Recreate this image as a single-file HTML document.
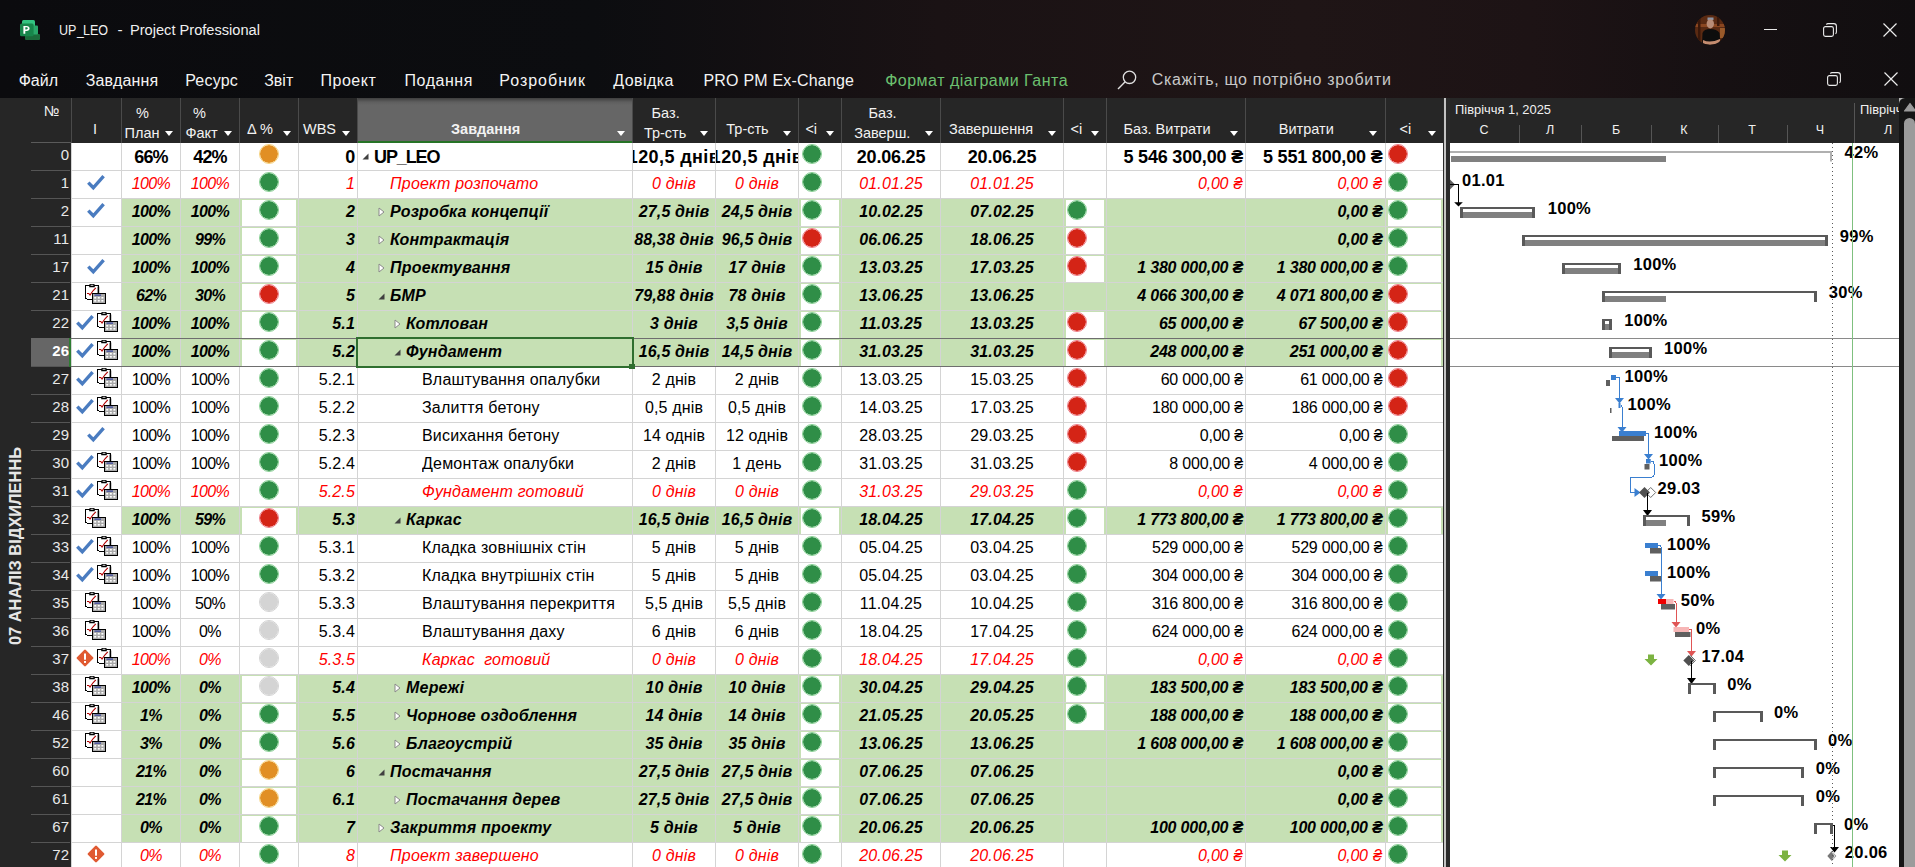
<!DOCTYPE html><html><head><meta charset="utf-8"><style>

*{box-sizing:border-box}
html,body{margin:0;padding:0}
body{width:1915px;height:867px;overflow:hidden;position:relative;background:#fff;font-family:"Liberation Sans",sans-serif}
.a{position:absolute}
.ci{position:absolute;width:20px;height:20px;border-radius:50%}
.c{position:absolute;height:27px;line-height:28px;white-space:pre;overflow:hidden;font-size:16px;color:#000}
.cc{display:flex;justify-content:center}
.cr{text-align:right}
.k-project{font-weight:bold;font-size:18px;padding-top:0.5px}
.k-summary{font-weight:bold;font-style:italic}
.k-milestone{font-style:italic;color:#f00}
.hd{position:absolute;color:#f2f2f2;font-size:14.5px;white-space:pre;line-height:17px}
.tri{position:absolute;width:0;height:0;border-left:4px solid transparent;border-right:4px solid transparent;border-top:5px solid #fff}
.mn{position:absolute;top:71px;color:#f4f4f4;font-size:16px;white-space:pre;line-height:20px}
.gl{position:absolute;font-weight:bold;font-size:16.5px;white-space:pre;line-height:19px;color:#000;letter-spacing:0.3px}

</style></head><body>
<div class="a" style="left:0;top:0;width:1915px;height:98px;background:linear-gradient(90deg,#0b0b0e 0%,#0c0d10 31%,#1a1214 49%,#1f1516 68%,#1d1315 80%,#161012 90%,#110e10 100%)"></div>
<svg class="a" style="left:18px;top:18px" width="24" height="24" viewBox="18 18 24 24">
<rect x="22" y="20" width="13" height="10" rx="1.5" fill="#33c481"/>
<rect x="25" y="34" width="15" height="6" rx="1" fill="#1b6b3b"/>
<rect x="32" y="25.5" width="6" height="9" rx="1" fill="#2aa86a"/>
<rect x="20" y="23.5" width="13.6" height="12.8" rx="1.5" fill="#17864b"/>
<path d="M23.4 33.8v-7.8h3.2c1.9 0 3 0.9 3 2.4s-1.1 2.5-3 2.5h-1.3v2.9z M25.3 29.4h1.1c0.9 0 1.4-0.4 1.4-1.1s-0.5-1.1-1.4-1.1h-1.1z" fill="#fff"/>
</svg>
<div class="a" style="left:58.6px;top:20.5px;color:#f0f0f0;font-size:15.3px;line-height:18px;white-space:pre;transform-origin:0 0;transform:scaleX(0.82)">UP</div>
<div class="a" style="left:76.6px;top:20.5px;color:#f0f0f0;font-size:15.3px;line-height:18px;white-space:pre;transform-origin:0 0;transform:scaleX(0.8)">_</div>
<div class="a" style="left:83.2px;top:20.5px;color:#f0f0f0;font-size:15.3px;line-height:18px;white-space:pre;transform-origin:0 0;transform:scaleX(0.82)">LEO</div>
<div class="a" style="left:117.5px;top:20.5px;color:#f0f0f0;font-size:15.3px;line-height:18px;white-space:pre;transform-origin:0 0;">-</div>
<div class="a" style="left:130.3px;top:20.5px;color:#f0f0f0;font-size:15.3px;line-height:18px;white-space:pre;transform-origin:0 0;transform:scaleX(0.955)">Project Professional</div>
<svg class="a" style="left:1695px;top:15px" width="30" height="30" viewBox="0 0 30 30">
<defs><clipPath id="av"><circle cx="15" cy="15" r="15"/></clipPath></defs>
<g clip-path="url(#av)">
<rect width="30" height="30" fill="#5a2a12"/>
<rect x="0" y="9" width="30" height="3" fill="#8a4620"/>
<rect x="3" y="2" width="2.5" height="26" fill="#3a180a"/>
<rect x="22" y="2" width="2.5" height="9" fill="#3a180a"/>
<rect x="25" y="13" width="5" height="10" fill="#9a5a2a"/>
<rect x="12.5" y="2.5" width="6" height="2.5" fill="#8c96a8"/>
<ellipse cx="15.3" cy="8.8" rx="3.7" ry="4.6" fill="#b98c76"/>
<path d="M7 30 L7.5 18 Q9 14 15 14 Q22 14 24.5 18 L25.5 30 Z" fill="#0d0d0d"/>
<path d="M8 25 Q15 28.5 25 24 L25 28 Q15 31 8 28.5 Z" fill="#c48c70"/>
</g></svg>
<div class="a" style="left:1764px;top:29px;width:13px;height:1px;background:#e8e8e8"></div>
<svg class="a" style="left:1823px;top:23px" width="14" height="14" viewBox="0 0 14 14"><rect x="0.6" y="3.6" width="9.8" height="9.8" rx="1.8" fill="none" stroke="#ececec" stroke-width="1.1"/><path d="M3.4 1.6 Q3.8 0.6 5 0.6 H10.8 Q13.4 0.6 13.4 3.2 V9 Q13.4 10.3 12.4 10.6" fill="none" stroke="#ececec" stroke-width="1.1"/></svg>
<svg class="a" style="left:1883px;top:23px" width="14" height="14" viewBox="0 0 14 14"><path d="M0.5 0.5 L13.5 13.5 M13.5 0.5 L0.5 13.5" stroke="#ececec" stroke-width="1.2"/></svg>
<svg class="a" style="left:1827px;top:72px" width="14" height="14" viewBox="0 0 14 14"><rect x="0.6" y="3.6" width="9.8" height="9.8" rx="1.8" fill="none" stroke="#ececec" stroke-width="1.1"/><path d="M3.4 1.6 Q3.8 0.6 5 0.6 H10.8 Q13.4 0.6 13.4 3.2 V9 Q13.4 10.3 12.4 10.6" fill="none" stroke="#ececec" stroke-width="1.1"/></svg>
<svg class="a" style="left:1884px;top:72px" width="14" height="14" viewBox="0 0 14 14"><path d="M0.5 0.5 L13.5 13.5 M13.5 0.5 L0.5 13.5" stroke="#ececec" stroke-width="1.2"/></svg>
<div class="mn" style="left:18.7px;letter-spacing:0px">Файл</div>
<div class="mn" style="left:85.7px;letter-spacing:0.14px">Завдання</div>
<div class="mn" style="left:185.2px;letter-spacing:0.2px">Ресурс</div>
<div class="mn" style="left:264.2px;letter-spacing:0px">Звіт</div>
<div class="mn" style="left:320.5px;letter-spacing:0.5px">Проект</div>
<div class="mn" style="left:404.5px;letter-spacing:0.55px">Подання</div>
<div class="mn" style="left:499.2px;letter-spacing:1.0px">Розробник</div>
<div class="mn" style="left:613.2px;letter-spacing:0.43px">Довідка</div>
<div class="mn" style="left:703.5px;letter-spacing:0.19px">PRO PM Ex-Change</div>
<div class="mn" style="left:885.2px;color:#6cc06f;letter-spacing:0.49px">Формат діаграми Ганта</div>
<svg class="a" style="left:1117px;top:69px" width="21" height="21" viewBox="0 0 21 21">
<circle cx="12.5" cy="8.3" r="6.2" fill="none" stroke="#e0e0e0" stroke-width="1.3"/>
<path d="M8.2 12.8 L1 20" stroke="#e0e0e0" stroke-width="1.4"/></svg>
<div class="mn" style="top:70px;left:1151.7px;color:#c8c8c8;letter-spacing:0.68px">Скажіть, що потрібно зробити</div>
<div class="a" style="left:0;top:98px;width:1443px;height:45px;background:#262626;z-index:2"></div>
<div class="a" style="left:358px;top:98px;width:274px;height:45px;background:linear-gradient(180deg,#3e3e3e 0px,#5e5e5e 4px,#666 7px,#666 100%);z-index:2"></div>
<div class="a" style="left:358px;top:141px;width:274px;height:2px;background:#267326;z-index:3"></div>
<div class="a" style="left:71px;top:98px;width:1px;height:45px;background:#4a4a4a;z-index:2"></div>
<div class="a" style="left:121px;top:98px;width:1px;height:45px;background:#4a4a4a;z-index:2"></div>
<div class="a" style="left:180px;top:98px;width:1px;height:45px;background:#4a4a4a;z-index:2"></div>
<div class="a" style="left:239px;top:98px;width:1px;height:45px;background:#4a4a4a;z-index:2"></div>
<div class="a" style="left:298px;top:98px;width:1px;height:45px;background:#4a4a4a;z-index:2"></div>
<div class="a" style="left:357px;top:98px;width:1px;height:45px;background:#4a4a4a;z-index:2"></div>
<div class="a" style="left:632px;top:98px;width:1px;height:45px;background:#4a4a4a;z-index:2"></div>
<div class="a" style="left:715px;top:98px;width:1px;height:45px;background:#4a4a4a;z-index:2"></div>
<div class="a" style="left:798px;top:98px;width:1px;height:45px;background:#4a4a4a;z-index:2"></div>
<div class="a" style="left:841px;top:98px;width:1px;height:45px;background:#4a4a4a;z-index:2"></div>
<div class="a" style="left:940px;top:98px;width:1px;height:45px;background:#4a4a4a;z-index:2"></div>
<div class="a" style="left:1063px;top:98px;width:1px;height:45px;background:#4a4a4a;z-index:2"></div>
<div class="a" style="left:1106px;top:98px;width:1px;height:45px;background:#4a4a4a;z-index:2"></div>
<div class="a" style="left:1245px;top:98px;width:1px;height:45px;background:#4a4a4a;z-index:2"></div>
<div class="a" style="left:1385px;top:98px;width:1px;height:45px;background:#4a4a4a;z-index:2"></div>
<div class="hd" style="left:44px;top:102.5px;z-index:3">№</div>
<div class="hd" style="left:93px;top:121.0px;z-index:3">I</div>
<div class="hd" style="left:136px;top:104.5px;z-index:3">%</div>
<div class="hd" style="left:124.6px;top:124.5px;z-index:3">План</div>
<div class="tri" style="left:165px;top:130.5px;z-index:3"></div>
<div class="hd" style="left:193px;top:104.5px;z-index:3">%</div>
<div class="hd" style="left:185.4px;top:124.5px;z-index:3">Факт</div>
<div class="tri" style="left:224px;top:130.5px;z-index:3"></div>
<div class="hd" style="left:247px;top:121.0px;z-index:3">Δ %</div>
<div class="tri" style="left:283px;top:130.5px;z-index:3"></div>
<div class="hd" style="left:303px;top:121.0px;z-index:3">WBS</div>
<div class="tri" style="left:342px;top:130.5px;z-index:3"></div>
<div class="hd" style="left:451px;top:121.0px;font-weight:bold;z-index:3">Завдання</div>
<div class="tri" style="left:617px;top:130.5px;z-index:3"></div>
<div class="hd" style="left:651.6px;top:104.5px;z-index:3">Баз.</div>
<div class="hd" style="left:643.9px;top:124.5px;z-index:3">Тр-сть</div>
<div class="tri" style="left:700px;top:130.5px;z-index:3"></div>
<div class="hd" style="left:726.3px;top:121.0px;z-index:3">Тр-сть</div>
<div class="tri" style="left:783px;top:130.5px;z-index:3"></div>
<div class="hd" style="left:805.4px;top:121.0px;z-index:3">&lt;i</div>
<div class="tri" style="left:826px;top:130.5px;z-index:3"></div>
<div class="hd" style="left:868.5px;top:104.5px;z-index:3">Баз.</div>
<div class="hd" style="left:854.2px;top:124.5px;z-index:3">Заверш.</div>
<div class="tri" style="left:925px;top:130.5px;z-index:3"></div>
<div class="hd" style="left:949px;top:121.0px;z-index:3">Завершення</div>
<div class="tri" style="left:1048px;top:130.5px;z-index:3"></div>
<div class="hd" style="left:1070.5px;top:121.0px;z-index:3">&lt;i</div>
<div class="tri" style="left:1091px;top:130.5px;z-index:3"></div>
<div class="hd" style="left:1123.5px;top:121.0px;z-index:3">Баз. Витрати</div>
<div class="tri" style="left:1230px;top:130.5px;z-index:3"></div>
<div class="hd" style="left:1278.8px;top:121.0px;z-index:3">Витрати</div>
<div class="tri" style="left:1369px;top:130.5px;z-index:3"></div>
<div class="hd" style="left:1399.6px;top:121.0px;z-index:3">&lt;i</div>
<div class="tri" style="left:1428px;top:130.5px;z-index:3"></div>
<div class="a" style="left:0;top:142px;width:71px;height:725px;background:#262626"></div>
<div class="a" style="left:31px;top:142px;width:40px;height:1px;background:#5a5a5a;z-index:3"></div>
<div class="a" style="left:-85px;top:536px;width:200px;height:20px;line-height:20px;text-align:center;transform:rotate(-90deg);color:#e6e6e6;font-weight:bold;font-size:16.4px;white-space:pre">07 АНАЛІЗ ВІДХИЛЕННЬ</div>
<div class="a" style="left:71px;top:142px;width:1372px;height:725px;background:#fff"></div>
<div class="a" style="left:31px;top:170px;width:40px;height:1px;background:#555"></div>
<div class="a" style="left:31.5px;top:140.5px;width:38px;height:28px;line-height:28px;text-align:right;font-size:15px;letter-spacing:0.3px;color:#e8e8e8;">0</div>
<div class="a" style="left:71px;top:170px;width:1372px;height:1px;background:#d4d4d4"></div>
<div class="a" style="left:31px;top:198px;width:40px;height:1px;background:#555"></div>
<div class="a" style="left:31.5px;top:168.5px;width:38px;height:28px;line-height:28px;text-align:right;font-size:15px;letter-spacing:0.3px;color:#e8e8e8;">1</div>
<div class="a" style="left:71px;top:198px;width:1372px;height:1px;background:#d4d4d4"></div>
<div class="a" style="left:31px;top:226px;width:40px;height:1px;background:#555"></div>
<div class="a" style="left:31.5px;top:196.5px;width:38px;height:28px;line-height:28px;text-align:right;font-size:15px;letter-spacing:0.3px;color:#e8e8e8;">2</div>
<div class="a" style="left:121px;top:199px;width:1322px;height:27px;background:#c6e0b4"></div>
<div class="a" style="left:242px;top:200px;width:54px;height:26px;background:#fff"></div>
<div class="a" style="left:801px;top:200px;width:38px;height:26px;background:#fff"></div>
<div class="a" style="left:1066px;top:200px;width:38px;height:26px;background:#fff"></div>
<div class="a" style="left:1388px;top:200px;width:53px;height:26px;background:#fff"></div>
<div class="a" style="left:71px;top:226px;width:1372px;height:1px;background:#d4d4d4"></div>
<div class="a" style="left:31px;top:254px;width:40px;height:1px;background:#555"></div>
<div class="a" style="left:31.5px;top:224.5px;width:38px;height:28px;line-height:28px;text-align:right;font-size:15px;letter-spacing:0.3px;color:#e8e8e8;">11</div>
<div class="a" style="left:121px;top:227px;width:1322px;height:27px;background:#c6e0b4"></div>
<div class="a" style="left:242px;top:228px;width:54px;height:26px;background:#fff"></div>
<div class="a" style="left:801px;top:228px;width:38px;height:26px;background:#fff"></div>
<div class="a" style="left:1066px;top:228px;width:38px;height:26px;background:#fff"></div>
<div class="a" style="left:1388px;top:228px;width:53px;height:26px;background:#fff"></div>
<div class="a" style="left:71px;top:254px;width:1372px;height:1px;background:#d4d4d4"></div>
<div class="a" style="left:31px;top:282px;width:40px;height:1px;background:#555"></div>
<div class="a" style="left:31.5px;top:252.5px;width:38px;height:28px;line-height:28px;text-align:right;font-size:15px;letter-spacing:0.3px;color:#e8e8e8;">17</div>
<div class="a" style="left:121px;top:255px;width:1322px;height:27px;background:#c6e0b4"></div>
<div class="a" style="left:242px;top:256px;width:54px;height:26px;background:#fff"></div>
<div class="a" style="left:801px;top:256px;width:38px;height:26px;background:#fff"></div>
<div class="a" style="left:1066px;top:256px;width:38px;height:26px;background:#fff"></div>
<div class="a" style="left:1388px;top:256px;width:53px;height:26px;background:#fff"></div>
<div class="a" style="left:71px;top:282px;width:1372px;height:1px;background:#d4d4d4"></div>
<div class="a" style="left:31px;top:310px;width:40px;height:1px;background:#555"></div>
<div class="a" style="left:31.5px;top:280.5px;width:38px;height:28px;line-height:28px;text-align:right;font-size:15px;letter-spacing:0.3px;color:#e8e8e8;">21</div>
<div class="a" style="left:121px;top:283px;width:1322px;height:27px;background:#c6e0b4"></div>
<div class="a" style="left:242px;top:284px;width:54px;height:26px;background:#fff"></div>
<div class="a" style="left:801px;top:284px;width:38px;height:26px;background:#fff"></div>
<div class="a" style="left:1388px;top:284px;width:53px;height:26px;background:#fff"></div>
<div class="a" style="left:71px;top:310px;width:1372px;height:1px;background:#d4d4d4"></div>
<div class="a" style="left:31px;top:338px;width:40px;height:1px;background:#555"></div>
<div class="a" style="left:31.5px;top:308.5px;width:38px;height:28px;line-height:28px;text-align:right;font-size:15px;letter-spacing:0.3px;color:#e8e8e8;">22</div>
<div class="a" style="left:121px;top:311px;width:1322px;height:27px;background:#c6e0b4"></div>
<div class="a" style="left:242px;top:312px;width:54px;height:26px;background:#fff"></div>
<div class="a" style="left:801px;top:312px;width:38px;height:26px;background:#fff"></div>
<div class="a" style="left:1066px;top:312px;width:38px;height:26px;background:#fff"></div>
<div class="a" style="left:1388px;top:312px;width:53px;height:26px;background:#fff"></div>
<div class="a" style="left:71px;top:338px;width:1372px;height:1px;background:#d4d4d4"></div>
<div class="a" style="left:31px;top:338px;width:40px;height:28px;background:#666"></div>
<div class="a" style="left:31px;top:366px;width:40px;height:1px;background:#555"></div>
<div class="a" style="left:31.5px;top:336.5px;width:38px;height:28px;line-height:28px;text-align:right;font-size:15px;letter-spacing:0.3px;font-weight:bold;color:#fff;">26</div>
<div class="a" style="left:121px;top:339px;width:1322px;height:27px;background:#c6e0b4"></div>
<div class="a" style="left:242px;top:340px;width:54px;height:26px;background:#fff"></div>
<div class="a" style="left:801px;top:340px;width:38px;height:26px;background:#fff"></div>
<div class="a" style="left:1066px;top:340px;width:38px;height:26px;background:#fff"></div>
<div class="a" style="left:1388px;top:340px;width:53px;height:26px;background:#fff"></div>
<div class="a" style="left:71px;top:366px;width:1372px;height:1px;background:#d4d4d4"></div>
<div class="a" style="left:31px;top:394px;width:40px;height:1px;background:#555"></div>
<div class="a" style="left:31.5px;top:364.5px;width:38px;height:28px;line-height:28px;text-align:right;font-size:15px;letter-spacing:0.3px;color:#e8e8e8;">27</div>
<div class="a" style="left:71px;top:394px;width:1372px;height:1px;background:#d4d4d4"></div>
<div class="a" style="left:31px;top:422px;width:40px;height:1px;background:#555"></div>
<div class="a" style="left:31.5px;top:392.5px;width:38px;height:28px;line-height:28px;text-align:right;font-size:15px;letter-spacing:0.3px;color:#e8e8e8;">28</div>
<div class="a" style="left:71px;top:422px;width:1372px;height:1px;background:#d4d4d4"></div>
<div class="a" style="left:31px;top:450px;width:40px;height:1px;background:#555"></div>
<div class="a" style="left:31.5px;top:420.5px;width:38px;height:28px;line-height:28px;text-align:right;font-size:15px;letter-spacing:0.3px;color:#e8e8e8;">29</div>
<div class="a" style="left:71px;top:450px;width:1372px;height:1px;background:#d4d4d4"></div>
<div class="a" style="left:31px;top:478px;width:40px;height:1px;background:#555"></div>
<div class="a" style="left:31.5px;top:448.5px;width:38px;height:28px;line-height:28px;text-align:right;font-size:15px;letter-spacing:0.3px;color:#e8e8e8;">30</div>
<div class="a" style="left:71px;top:478px;width:1372px;height:1px;background:#d4d4d4"></div>
<div class="a" style="left:31px;top:506px;width:40px;height:1px;background:#555"></div>
<div class="a" style="left:31.5px;top:476.5px;width:38px;height:28px;line-height:28px;text-align:right;font-size:15px;letter-spacing:0.3px;color:#e8e8e8;">31</div>
<div class="a" style="left:71px;top:506px;width:1372px;height:1px;background:#d4d4d4"></div>
<div class="a" style="left:31px;top:534px;width:40px;height:1px;background:#555"></div>
<div class="a" style="left:31.5px;top:504.5px;width:38px;height:28px;line-height:28px;text-align:right;font-size:15px;letter-spacing:0.3px;color:#e8e8e8;">32</div>
<div class="a" style="left:121px;top:507px;width:1322px;height:27px;background:#c6e0b4"></div>
<div class="a" style="left:242px;top:508px;width:54px;height:26px;background:#fff"></div>
<div class="a" style="left:801px;top:508px;width:38px;height:26px;background:#fff"></div>
<div class="a" style="left:1066px;top:508px;width:38px;height:26px;background:#fff"></div>
<div class="a" style="left:1388px;top:508px;width:53px;height:26px;background:#fff"></div>
<div class="a" style="left:71px;top:534px;width:1372px;height:1px;background:#d4d4d4"></div>
<div class="a" style="left:31px;top:562px;width:40px;height:1px;background:#555"></div>
<div class="a" style="left:31.5px;top:532.5px;width:38px;height:28px;line-height:28px;text-align:right;font-size:15px;letter-spacing:0.3px;color:#e8e8e8;">33</div>
<div class="a" style="left:71px;top:562px;width:1372px;height:1px;background:#d4d4d4"></div>
<div class="a" style="left:31px;top:590px;width:40px;height:1px;background:#555"></div>
<div class="a" style="left:31.5px;top:560.5px;width:38px;height:28px;line-height:28px;text-align:right;font-size:15px;letter-spacing:0.3px;color:#e8e8e8;">34</div>
<div class="a" style="left:71px;top:590px;width:1372px;height:1px;background:#d4d4d4"></div>
<div class="a" style="left:31px;top:618px;width:40px;height:1px;background:#555"></div>
<div class="a" style="left:31.5px;top:588.5px;width:38px;height:28px;line-height:28px;text-align:right;font-size:15px;letter-spacing:0.3px;color:#e8e8e8;">35</div>
<div class="a" style="left:71px;top:618px;width:1372px;height:1px;background:#d4d4d4"></div>
<div class="a" style="left:31px;top:646px;width:40px;height:1px;background:#555"></div>
<div class="a" style="left:31.5px;top:616.5px;width:38px;height:28px;line-height:28px;text-align:right;font-size:15px;letter-spacing:0.3px;color:#e8e8e8;">36</div>
<div class="a" style="left:71px;top:646px;width:1372px;height:1px;background:#d4d4d4"></div>
<div class="a" style="left:31px;top:674px;width:40px;height:1px;background:#555"></div>
<div class="a" style="left:31.5px;top:644.5px;width:38px;height:28px;line-height:28px;text-align:right;font-size:15px;letter-spacing:0.3px;color:#e8e8e8;">37</div>
<div class="a" style="left:71px;top:674px;width:1372px;height:1px;background:#d4d4d4"></div>
<div class="a" style="left:31px;top:702px;width:40px;height:1px;background:#555"></div>
<div class="a" style="left:31.5px;top:672.5px;width:38px;height:28px;line-height:28px;text-align:right;font-size:15px;letter-spacing:0.3px;color:#e8e8e8;">38</div>
<div class="a" style="left:121px;top:675px;width:1322px;height:27px;background:#c6e0b4"></div>
<div class="a" style="left:242px;top:676px;width:54px;height:26px;background:#fff"></div>
<div class="a" style="left:801px;top:676px;width:38px;height:26px;background:#fff"></div>
<div class="a" style="left:1066px;top:676px;width:38px;height:26px;background:#fff"></div>
<div class="a" style="left:1388px;top:676px;width:53px;height:26px;background:#fff"></div>
<div class="a" style="left:71px;top:702px;width:1372px;height:1px;background:#d4d4d4"></div>
<div class="a" style="left:31px;top:730px;width:40px;height:1px;background:#555"></div>
<div class="a" style="left:31.5px;top:700.5px;width:38px;height:28px;line-height:28px;text-align:right;font-size:15px;letter-spacing:0.3px;color:#e8e8e8;">46</div>
<div class="a" style="left:121px;top:703px;width:1322px;height:27px;background:#c6e0b4"></div>
<div class="a" style="left:242px;top:704px;width:54px;height:26px;background:#fff"></div>
<div class="a" style="left:801px;top:704px;width:38px;height:26px;background:#fff"></div>
<div class="a" style="left:1066px;top:704px;width:38px;height:26px;background:#fff"></div>
<div class="a" style="left:1388px;top:704px;width:53px;height:26px;background:#fff"></div>
<div class="a" style="left:71px;top:730px;width:1372px;height:1px;background:#d4d4d4"></div>
<div class="a" style="left:31px;top:758px;width:40px;height:1px;background:#555"></div>
<div class="a" style="left:31.5px;top:728.5px;width:38px;height:28px;line-height:28px;text-align:right;font-size:15px;letter-spacing:0.3px;color:#e8e8e8;">52</div>
<div class="a" style="left:121px;top:731px;width:1322px;height:27px;background:#c6e0b4"></div>
<div class="a" style="left:242px;top:732px;width:54px;height:26px;background:#fff"></div>
<div class="a" style="left:801px;top:732px;width:38px;height:26px;background:#fff"></div>
<div class="a" style="left:1388px;top:732px;width:53px;height:26px;background:#fff"></div>
<div class="a" style="left:71px;top:758px;width:1372px;height:1px;background:#d4d4d4"></div>
<div class="a" style="left:31px;top:786px;width:40px;height:1px;background:#555"></div>
<div class="a" style="left:31.5px;top:756.5px;width:38px;height:28px;line-height:28px;text-align:right;font-size:15px;letter-spacing:0.3px;color:#e8e8e8;">60</div>
<div class="a" style="left:121px;top:759px;width:1322px;height:27px;background:#c6e0b4"></div>
<div class="a" style="left:242px;top:760px;width:54px;height:26px;background:#fff"></div>
<div class="a" style="left:801px;top:760px;width:38px;height:26px;background:#fff"></div>
<div class="a" style="left:1388px;top:760px;width:53px;height:26px;background:#fff"></div>
<div class="a" style="left:71px;top:786px;width:1372px;height:1px;background:#d4d4d4"></div>
<div class="a" style="left:31px;top:814px;width:40px;height:1px;background:#555"></div>
<div class="a" style="left:31.5px;top:784.5px;width:38px;height:28px;line-height:28px;text-align:right;font-size:15px;letter-spacing:0.3px;color:#e8e8e8;">61</div>
<div class="a" style="left:121px;top:787px;width:1322px;height:27px;background:#c6e0b4"></div>
<div class="a" style="left:242px;top:788px;width:54px;height:26px;background:#fff"></div>
<div class="a" style="left:801px;top:788px;width:38px;height:26px;background:#fff"></div>
<div class="a" style="left:1388px;top:788px;width:53px;height:26px;background:#fff"></div>
<div class="a" style="left:71px;top:814px;width:1372px;height:1px;background:#d4d4d4"></div>
<div class="a" style="left:31px;top:842px;width:40px;height:1px;background:#555"></div>
<div class="a" style="left:31.5px;top:812.5px;width:38px;height:28px;line-height:28px;text-align:right;font-size:15px;letter-spacing:0.3px;color:#e8e8e8;">67</div>
<div class="a" style="left:121px;top:815px;width:1322px;height:27px;background:#c6e0b4"></div>
<div class="a" style="left:242px;top:816px;width:54px;height:26px;background:#fff"></div>
<div class="a" style="left:801px;top:816px;width:38px;height:26px;background:#fff"></div>
<div class="a" style="left:1388px;top:816px;width:53px;height:26px;background:#fff"></div>
<div class="a" style="left:71px;top:842px;width:1372px;height:1px;background:#d4d4d4"></div>
<div class="a" style="left:31px;top:870px;width:40px;height:1px;background:#555"></div>
<div class="a" style="left:31.5px;top:840.5px;width:38px;height:28px;line-height:28px;text-align:right;font-size:15px;letter-spacing:0.3px;color:#e8e8e8;">72</div>
<div class="a" style="left:71px;top:870px;width:1372px;height:1px;background:#d4d4d4"></div>
<div class="a" style="left:71px;top:142px;width:1px;height:725px;background:#d4d4d4"></div>
<div class="a" style="left:121px;top:142px;width:1px;height:725px;background:#d4d4d4"></div>
<div class="a" style="left:180px;top:142px;width:1px;height:725px;background:#d4d4d4"></div>
<div class="a" style="left:239px;top:142px;width:1px;height:725px;background:#d4d4d4"></div>
<div class="a" style="left:298px;top:142px;width:1px;height:725px;background:#d4d4d4"></div>
<div class="a" style="left:357px;top:142px;width:1px;height:725px;background:#d4d4d4"></div>
<div class="a" style="left:632px;top:142px;width:1px;height:725px;background:#d4d4d4"></div>
<div class="a" style="left:715px;top:142px;width:1px;height:725px;background:#d4d4d4"></div>
<div class="a" style="left:798px;top:142px;width:1px;height:725px;background:#d4d4d4"></div>
<div class="a" style="left:841px;top:142px;width:1px;height:725px;background:#d4d4d4"></div>
<div class="a" style="left:940px;top:142px;width:1px;height:725px;background:#d4d4d4"></div>
<div class="a" style="left:1063px;top:142px;width:1px;height:725px;background:#d4d4d4"></div>
<div class="a" style="left:1106px;top:142px;width:1px;height:725px;background:#d4d4d4"></div>
<div class="a" style="left:1245px;top:142px;width:1px;height:725px;background:#d4d4d4"></div>
<div class="a" style="left:1385px;top:142px;width:1px;height:725px;background:#d4d4d4"></div>
<div class="a" style="left:70px;top:142px;width:1px;height:725px;background:#2a2a2a"></div>
<div class="c cc k-project" style="left:122px;top:142px;width:58px;letter-spacing:-0.9px;"><span>66%</span></div>
<div class="c cc k-project" style="left:181px;top:142px;width:58px;letter-spacing:-0.9px;"><span>42%</span></div>
<div class="ci" style="left:259px;top:144px;background:#e18f24;border:1.6px solid #f6d27e;background-clip:padding-box"></div>
<div class="c cr k-project" style="left:299px;top:142px;width:58px;padding-right:2px;letter-spacing:-0.2px;">0</div>
<svg class="a" style="left:362px;top:153px" width="7" height="7" viewBox="0 0 7 7"><path d="M6.5 0.5 V6.5 H0.5 Z" fill="#404040"/></svg>
<div class="c k-project" style="left:374px;top:142px;width:258px;letter-spacing:-1.1px">UP_LEO</div>
<div class="c cc k-project" style="left:633px;top:142px;width:82px;letter-spacing:0.4px;"><span>120,5 днів</span></div>
<div class="c cc k-project" style="left:716px;top:142px;width:82px;letter-spacing:0.4px;"><span>120,5 днів</span></div>
<div class="ci" style="left:802px;top:144px;background:#2f8e47;border:1.6px solid #86cf92;background-clip:padding-box"></div>
<div class="c cc k-project" style="left:842px;top:142px;width:98px;letter-spacing:-0.2px;"><span>20.06.25</span></div>
<div class="c cc k-project" style="left:941px;top:142px;width:122px;letter-spacing:-0.2px;"><span>20.06.25</span></div>
<div class="c cr k-project" style="left:1107px;top:142px;width:138px;padding-right:2px;letter-spacing:-0.18px;">5 546 300,00 ₴</div>
<div class="c cr k-project" style="left:1246px;top:142px;width:139px;padding-right:2.5px;letter-spacing:-0.18px;">5 551 800,00 ₴</div>
<div class="ci" style="left:1388px;top:144px;background:#d42416;border:1.6px solid #ee7a84;background-clip:padding-box"></div>
<svg class="a" style="left:87px;top:175px" width="18" height="16" viewBox="0 0 18 16"><path d="M1.3 7.6 L6.3 12.8 L16.6 1.2" fill="none" stroke="#4a7cc0" stroke-width="3.4" stroke-linejoin="miter"/></svg>
<div class="c cc k-milestone" style="left:122px;top:170px;width:58px;letter-spacing:-0.65px;"><span>100%</span></div>
<div class="c cc k-milestone" style="left:181px;top:170px;width:58px;letter-spacing:-0.65px;"><span>100%</span></div>
<div class="ci" style="left:259px;top:172px;background:#2f8e47;border:1.6px solid #86cf92;background-clip:padding-box"></div>
<div class="c cr k-milestone" style="left:299px;top:170px;width:58px;padding-right:2px;letter-spacing:0.15px;">1</div>
<div class="c k-milestone" style="left:390px;top:170px;width:242px;letter-spacing:0.2px">Проект розпочато</div>
<div class="c cc k-milestone" style="left:633px;top:170px;width:82px;letter-spacing:0.15px;"><span>0 днів</span></div>
<div class="c cc k-milestone" style="left:716px;top:170px;width:82px;letter-spacing:0.15px;"><span>0 днів</span></div>
<div class="ci" style="left:802px;top:172px;background:#2f8e47;border:1.6px solid #86cf92;background-clip:padding-box"></div>
<div class="c cc k-milestone" style="left:842px;top:170px;width:98px;letter-spacing:0.15px;"><span>01.01.25</span></div>
<div class="c cc k-milestone" style="left:941px;top:170px;width:122px;letter-spacing:0.15px;"><span>01.01.25</span></div>
<div class="c cr k-milestone" style="left:1107px;top:170px;width:138px;padding-right:2px;letter-spacing:-0.2px;">0,00 ₴</div>
<div class="c cr k-milestone" style="left:1246px;top:170px;width:139px;padding-right:2.5px;letter-spacing:-0.2px;">0,00 ₴</div>
<div class="ci" style="left:1388px;top:172px;background:#2f8e47;border:1.6px solid #86cf92;background-clip:padding-box"></div>
<svg class="a" style="left:87px;top:203px" width="18" height="16" viewBox="0 0 18 16"><path d="M1.3 7.6 L6.3 12.8 L16.6 1.2" fill="none" stroke="#4a7cc0" stroke-width="3.4" stroke-linejoin="miter"/></svg>
<div class="c cc k-summary" style="left:122px;top:198px;width:58px;letter-spacing:-0.65px;"><span>100%</span></div>
<div class="c cc k-summary" style="left:181px;top:198px;width:58px;letter-spacing:-0.65px;"><span>100%</span></div>
<div class="ci" style="left:259px;top:200px;background:#2f8e47;border:1.6px solid #86cf92;background-clip:padding-box"></div>
<div class="c cr k-summary" style="left:299px;top:198px;width:58px;padding-right:2px;letter-spacing:0.15px;">2</div>
<svg class="a" style="left:378px;top:207px" width="7" height="10" viewBox="0 0 7 10"><path d="M1 1 L6 5 L1 9 Z" fill="#fff" stroke="#8a8a8a" stroke-width="1"/></svg>
<div class="c k-summary" style="left:390px;top:198px;width:242px;letter-spacing:0.2px">Розробка концепції</div>
<div class="c cc k-summary" style="left:633px;top:198px;width:82px;letter-spacing:0.15px;"><span>27,5 днів</span></div>
<div class="c cc k-summary" style="left:716px;top:198px;width:82px;letter-spacing:0.15px;"><span>24,5 днів</span></div>
<div class="ci" style="left:802px;top:200px;background:#2f8e47;border:1.6px solid #86cf92;background-clip:padding-box"></div>
<div class="c cc k-summary" style="left:842px;top:198px;width:98px;letter-spacing:0.15px;"><span>10.02.25</span></div>
<div class="c cc k-summary" style="left:941px;top:198px;width:122px;letter-spacing:0.15px;"><span>07.02.25</span></div>
<div class="ci" style="left:1067px;top:200px;background:#2f8e47;border:1.6px solid #86cf92;background-clip:padding-box"></div>
<div class="c cr k-summary" style="left:1107px;top:198px;width:138px;padding-right:2px;letter-spacing:-0.2px;"></div>
<div class="c cr k-summary" style="left:1246px;top:198px;width:139px;padding-right:2.5px;letter-spacing:-0.2px;">0,00 ₴</div>
<div class="ci" style="left:1388px;top:200px;background:#2f8e47;border:1.6px solid #86cf92;background-clip:padding-box"></div>
<div class="c cc k-summary" style="left:122px;top:226px;width:58px;letter-spacing:-0.65px;"><span>100%</span></div>
<div class="c cc k-summary" style="left:181px;top:226px;width:58px;letter-spacing:-0.65px;"><span>99%</span></div>
<div class="ci" style="left:259px;top:228px;background:#2f8e47;border:1.6px solid #86cf92;background-clip:padding-box"></div>
<div class="c cr k-summary" style="left:299px;top:226px;width:58px;padding-right:2px;letter-spacing:0.15px;">3</div>
<svg class="a" style="left:378px;top:235px" width="7" height="10" viewBox="0 0 7 10"><path d="M1 1 L6 5 L1 9 Z" fill="#fff" stroke="#8a8a8a" stroke-width="1"/></svg>
<div class="c k-summary" style="left:390px;top:226px;width:242px;letter-spacing:0.2px">Контрактація</div>
<div class="c cc k-summary" style="left:633px;top:226px;width:82px;letter-spacing:0.15px;"><span>88,38 днів</span></div>
<div class="c cc k-summary" style="left:716px;top:226px;width:82px;letter-spacing:0.15px;"><span>96,5 днів</span></div>
<div class="ci" style="left:802px;top:228px;background:#d42416;border:1.6px solid #ee7a84;background-clip:padding-box"></div>
<div class="c cc k-summary" style="left:842px;top:226px;width:98px;letter-spacing:0.15px;"><span>06.06.25</span></div>
<div class="c cc k-summary" style="left:941px;top:226px;width:122px;letter-spacing:0.15px;"><span>18.06.25</span></div>
<div class="ci" style="left:1067px;top:228px;background:#d42416;border:1.6px solid #ee7a84;background-clip:padding-box"></div>
<div class="c cr k-summary" style="left:1107px;top:226px;width:138px;padding-right:2px;letter-spacing:-0.2px;"></div>
<div class="c cr k-summary" style="left:1246px;top:226px;width:139px;padding-right:2.5px;letter-spacing:-0.2px;">0,00 ₴</div>
<div class="ci" style="left:1388px;top:228px;background:#2f8e47;border:1.6px solid #86cf92;background-clip:padding-box"></div>
<svg class="a" style="left:87px;top:259px" width="18" height="16" viewBox="0 0 18 16"><path d="M1.3 7.6 L6.3 12.8 L16.6 1.2" fill="none" stroke="#4a7cc0" stroke-width="3.4" stroke-linejoin="miter"/></svg>
<div class="c cc k-summary" style="left:122px;top:254px;width:58px;letter-spacing:-0.65px;"><span>100%</span></div>
<div class="c cc k-summary" style="left:181px;top:254px;width:58px;letter-spacing:-0.65px;"><span>100%</span></div>
<div class="ci" style="left:259px;top:256px;background:#2f8e47;border:1.6px solid #86cf92;background-clip:padding-box"></div>
<div class="c cr k-summary" style="left:299px;top:254px;width:58px;padding-right:2px;letter-spacing:0.15px;">4</div>
<svg class="a" style="left:378px;top:263px" width="7" height="10" viewBox="0 0 7 10"><path d="M1 1 L6 5 L1 9 Z" fill="#fff" stroke="#8a8a8a" stroke-width="1"/></svg>
<div class="c k-summary" style="left:390px;top:254px;width:242px;letter-spacing:0.2px">Проектування</div>
<div class="c cc k-summary" style="left:633px;top:254px;width:82px;letter-spacing:0.15px;"><span>15 днів</span></div>
<div class="c cc k-summary" style="left:716px;top:254px;width:82px;letter-spacing:0.15px;"><span>17 днів</span></div>
<div class="ci" style="left:802px;top:256px;background:#2f8e47;border:1.6px solid #86cf92;background-clip:padding-box"></div>
<div class="c cc k-summary" style="left:842px;top:254px;width:98px;letter-spacing:0.15px;"><span>13.03.25</span></div>
<div class="c cc k-summary" style="left:941px;top:254px;width:122px;letter-spacing:0.15px;"><span>17.03.25</span></div>
<div class="ci" style="left:1067px;top:256px;background:#d42416;border:1.6px solid #ee7a84;background-clip:padding-box"></div>
<div class="c cr k-summary" style="left:1107px;top:254px;width:138px;padding-right:2px;letter-spacing:-0.2px;">1 380 000,00 ₴</div>
<div class="c cr k-summary" style="left:1246px;top:254px;width:139px;padding-right:2.5px;letter-spacing:-0.2px;">1 380 000,00 ₴</div>
<div class="ci" style="left:1388px;top:256px;background:#2f8e47;border:1.6px solid #86cf92;background-clip:padding-box"></div>
<svg class="a" style="left:85px;top:284.3px" width="21" height="20" viewBox="0 0 21 20"><rect x="0.5" y="1.5" width="13" height="13.5" rx="1.2" fill="#fff" stroke="#000" stroke-width="1" shape-rendering="crispEdges"/><rect x="12.6" y="2.5" width="1.6" height="10" fill="#000"/><path d="M4.2 3.2 V1.2 Q4.2 0 5.4 0 H8.6 Q9.8 0 9.8 1.2 V3.2 Z" fill="#000"/><rect x="5.6" y="0.8" width="2.8" height="0.9" fill="#fff"/><path d="M2 9.5 H3.8 L5 11 L8 6.8 L10.8 3.8" stroke="#b00000" stroke-width="1.1" fill="none"/><rect x="7.7" y="9.5" width="12.6" height="10" fill="#a9a9a9" stroke="#000" stroke-width="1" shape-rendering="crispEdges"/><rect x="9.5" y="10.6" width="6.5" height="1" fill="#1a2a9a"/><rect x="9.2" y="13" width="2" height="1.6" fill="#fff"/><rect x="12.8" y="13" width="2" height="1.6" fill="#fff"/><rect x="16.4" y="13" width="2" height="1.6" fill="#fff"/><rect x="9.2" y="16" width="2" height="1.6" fill="#fff"/><rect x="12.8" y="16" width="2" height="1.6" fill="#fff"/><rect x="16.4" y="16" width="2" height="1.6" fill="#fff"/></svg>
<div class="c cc k-summary" style="left:122px;top:282px;width:58px;letter-spacing:-0.65px;"><span>62%</span></div>
<div class="c cc k-summary" style="left:181px;top:282px;width:58px;letter-spacing:-0.65px;"><span>30%</span></div>
<div class="ci" style="left:259px;top:284px;background:#d42416;border:1.6px solid #ee7a84;background-clip:padding-box"></div>
<div class="c cr k-summary" style="left:299px;top:282px;width:58px;padding-right:2px;letter-spacing:0.15px;">5</div>
<svg class="a" style="left:378px;top:293px" width="7" height="7" viewBox="0 0 7 7"><path d="M6.5 0.5 V6.5 H0.5 Z" fill="#404040"/></svg>
<div class="c k-summary" style="left:390px;top:282px;width:242px;letter-spacing:0.2px">БМР</div>
<div class="c cc k-summary" style="left:633px;top:282px;width:82px;letter-spacing:0.15px;"><span>79,88 днів</span></div>
<div class="c cc k-summary" style="left:716px;top:282px;width:82px;letter-spacing:0.15px;"><span>78 днів</span></div>
<div class="ci" style="left:802px;top:284px;background:#2f8e47;border:1.6px solid #86cf92;background-clip:padding-box"></div>
<div class="c cc k-summary" style="left:842px;top:282px;width:98px;letter-spacing:0.15px;"><span>13.06.25</span></div>
<div class="c cc k-summary" style="left:941px;top:282px;width:122px;letter-spacing:0.15px;"><span>13.06.25</span></div>
<div class="c cr k-summary" style="left:1107px;top:282px;width:138px;padding-right:2px;letter-spacing:-0.2px;">4 066 300,00 ₴</div>
<div class="c cr k-summary" style="left:1246px;top:282px;width:139px;padding-right:2.5px;letter-spacing:-0.2px;">4 071 800,00 ₴</div>
<div class="ci" style="left:1388px;top:284px;background:#d42416;border:1.6px solid #ee7a84;background-clip:padding-box"></div>
<svg class="a" style="left:76px;top:315px" width="18" height="16" viewBox="0 0 18 16"><path d="M1.3 7.6 L6.3 12.8 L16.6 1.2" fill="none" stroke="#4a7cc0" stroke-width="3.4" stroke-linejoin="miter"/></svg>
<svg class="a" style="left:96.5px;top:312.3px" width="21" height="20" viewBox="0 0 21 20"><rect x="0.5" y="1.5" width="13" height="13.5" rx="1.2" fill="#fff" stroke="#000" stroke-width="1" shape-rendering="crispEdges"/><rect x="12.6" y="2.5" width="1.6" height="10" fill="#000"/><path d="M4.2 3.2 V1.2 Q4.2 0 5.4 0 H8.6 Q9.8 0 9.8 1.2 V3.2 Z" fill="#000"/><rect x="5.6" y="0.8" width="2.8" height="0.9" fill="#fff"/><path d="M2 9.5 H3.8 L5 11 L8 6.8 L10.8 3.8" stroke="#b00000" stroke-width="1.1" fill="none"/><rect x="7.7" y="9.5" width="12.6" height="10" fill="#a9a9a9" stroke="#000" stroke-width="1" shape-rendering="crispEdges"/><rect x="9.5" y="10.6" width="6.5" height="1" fill="#1a2a9a"/><rect x="9.2" y="13" width="2" height="1.6" fill="#fff"/><rect x="12.8" y="13" width="2" height="1.6" fill="#fff"/><rect x="16.4" y="13" width="2" height="1.6" fill="#fff"/><rect x="9.2" y="16" width="2" height="1.6" fill="#fff"/><rect x="12.8" y="16" width="2" height="1.6" fill="#fff"/><rect x="16.4" y="16" width="2" height="1.6" fill="#fff"/></svg>
<div class="c cc k-summary" style="left:122px;top:310px;width:58px;letter-spacing:-0.65px;"><span>100%</span></div>
<div class="c cc k-summary" style="left:181px;top:310px;width:58px;letter-spacing:-0.65px;"><span>100%</span></div>
<div class="ci" style="left:259px;top:312px;background:#2f8e47;border:1.6px solid #86cf92;background-clip:padding-box"></div>
<div class="c cr k-summary" style="left:299px;top:310px;width:58px;padding-right:2px;letter-spacing:0.15px;">5.1</div>
<svg class="a" style="left:394px;top:319px" width="7" height="10" viewBox="0 0 7 10"><path d="M1 1 L6 5 L1 9 Z" fill="#fff" stroke="#8a8a8a" stroke-width="1"/></svg>
<div class="c k-summary" style="left:406px;top:310px;width:226px;letter-spacing:0.2px">Котлован</div>
<div class="c cc k-summary" style="left:633px;top:310px;width:82px;letter-spacing:0.15px;"><span>3 днів</span></div>
<div class="c cc k-summary" style="left:716px;top:310px;width:82px;letter-spacing:0.15px;"><span>3,5 днів</span></div>
<div class="ci" style="left:802px;top:312px;background:#2f8e47;border:1.6px solid #86cf92;background-clip:padding-box"></div>
<div class="c cc k-summary" style="left:842px;top:310px;width:98px;letter-spacing:0.15px;"><span>11.03.25</span></div>
<div class="c cc k-summary" style="left:941px;top:310px;width:122px;letter-spacing:0.15px;"><span>13.03.25</span></div>
<div class="ci" style="left:1067px;top:312px;background:#d42416;border:1.6px solid #ee7a84;background-clip:padding-box"></div>
<div class="c cr k-summary" style="left:1107px;top:310px;width:138px;padding-right:2px;letter-spacing:-0.2px;">65 000,00 ₴</div>
<div class="c cr k-summary" style="left:1246px;top:310px;width:139px;padding-right:2.5px;letter-spacing:-0.2px;">67 500,00 ₴</div>
<div class="ci" style="left:1388px;top:312px;background:#d42416;border:1.6px solid #ee7a84;background-clip:padding-box"></div>
<svg class="a" style="left:76px;top:343px" width="18" height="16" viewBox="0 0 18 16"><path d="M1.3 7.6 L6.3 12.8 L16.6 1.2" fill="none" stroke="#4a7cc0" stroke-width="3.4" stroke-linejoin="miter"/></svg>
<svg class="a" style="left:96.5px;top:340.3px" width="21" height="20" viewBox="0 0 21 20"><rect x="0.5" y="1.5" width="13" height="13.5" rx="1.2" fill="#fff" stroke="#000" stroke-width="1" shape-rendering="crispEdges"/><rect x="12.6" y="2.5" width="1.6" height="10" fill="#000"/><path d="M4.2 3.2 V1.2 Q4.2 0 5.4 0 H8.6 Q9.8 0 9.8 1.2 V3.2 Z" fill="#000"/><rect x="5.6" y="0.8" width="2.8" height="0.9" fill="#fff"/><path d="M2 9.5 H3.8 L5 11 L8 6.8 L10.8 3.8" stroke="#b00000" stroke-width="1.1" fill="none"/><rect x="7.7" y="9.5" width="12.6" height="10" fill="#a9a9a9" stroke="#000" stroke-width="1" shape-rendering="crispEdges"/><rect x="9.5" y="10.6" width="6.5" height="1" fill="#1a2a9a"/><rect x="9.2" y="13" width="2" height="1.6" fill="#fff"/><rect x="12.8" y="13" width="2" height="1.6" fill="#fff"/><rect x="16.4" y="13" width="2" height="1.6" fill="#fff"/><rect x="9.2" y="16" width="2" height="1.6" fill="#fff"/><rect x="12.8" y="16" width="2" height="1.6" fill="#fff"/><rect x="16.4" y="16" width="2" height="1.6" fill="#fff"/></svg>
<div class="c cc k-summary" style="left:122px;top:338px;width:58px;letter-spacing:-0.65px;"><span>100%</span></div>
<div class="c cc k-summary" style="left:181px;top:338px;width:58px;letter-spacing:-0.65px;"><span>100%</span></div>
<div class="ci" style="left:259px;top:340px;background:#2f8e47;border:1.6px solid #86cf92;background-clip:padding-box"></div>
<div class="c cr k-summary" style="left:299px;top:338px;width:58px;padding-right:2px;letter-spacing:0.15px;">5.2</div>
<svg class="a" style="left:394px;top:349px" width="7" height="7" viewBox="0 0 7 7"><path d="M6.5 0.5 V6.5 H0.5 Z" fill="#404040"/></svg>
<div class="c k-summary" style="left:406px;top:338px;width:226px;letter-spacing:0.2px">Фундамент</div>
<div class="c cc k-summary" style="left:633px;top:338px;width:82px;letter-spacing:0.15px;"><span>16,5 днів</span></div>
<div class="c cc k-summary" style="left:716px;top:338px;width:82px;letter-spacing:0.15px;"><span>14,5 днів</span></div>
<div class="ci" style="left:802px;top:340px;background:#2f8e47;border:1.6px solid #86cf92;background-clip:padding-box"></div>
<div class="c cc k-summary" style="left:842px;top:338px;width:98px;letter-spacing:0.15px;"><span>31.03.25</span></div>
<div class="c cc k-summary" style="left:941px;top:338px;width:122px;letter-spacing:0.15px;"><span>31.03.25</span></div>
<div class="ci" style="left:1067px;top:340px;background:#d42416;border:1.6px solid #ee7a84;background-clip:padding-box"></div>
<div class="c cr k-summary" style="left:1107px;top:338px;width:138px;padding-right:2px;letter-spacing:-0.2px;">248 000,00 ₴</div>
<div class="c cr k-summary" style="left:1246px;top:338px;width:139px;padding-right:2.5px;letter-spacing:-0.2px;">251 000,00 ₴</div>
<div class="ci" style="left:1388px;top:340px;background:#d42416;border:1.6px solid #ee7a84;background-clip:padding-box"></div>
<svg class="a" style="left:76px;top:371px" width="18" height="16" viewBox="0 0 18 16"><path d="M1.3 7.6 L6.3 12.8 L16.6 1.2" fill="none" stroke="#4a7cc0" stroke-width="3.4" stroke-linejoin="miter"/></svg>
<svg class="a" style="left:96.5px;top:368.3px" width="21" height="20" viewBox="0 0 21 20"><rect x="0.5" y="1.5" width="13" height="13.5" rx="1.2" fill="#fff" stroke="#000" stroke-width="1" shape-rendering="crispEdges"/><rect x="12.6" y="2.5" width="1.6" height="10" fill="#000"/><path d="M4.2 3.2 V1.2 Q4.2 0 5.4 0 H8.6 Q9.8 0 9.8 1.2 V3.2 Z" fill="#000"/><rect x="5.6" y="0.8" width="2.8" height="0.9" fill="#fff"/><path d="M2 9.5 H3.8 L5 11 L8 6.8 L10.8 3.8" stroke="#b00000" stroke-width="1.1" fill="none"/><rect x="7.7" y="9.5" width="12.6" height="10" fill="#a9a9a9" stroke="#000" stroke-width="1" shape-rendering="crispEdges"/><rect x="9.5" y="10.6" width="6.5" height="1" fill="#1a2a9a"/><rect x="9.2" y="13" width="2" height="1.6" fill="#fff"/><rect x="12.8" y="13" width="2" height="1.6" fill="#fff"/><rect x="16.4" y="13" width="2" height="1.6" fill="#fff"/><rect x="9.2" y="16" width="2" height="1.6" fill="#fff"/><rect x="12.8" y="16" width="2" height="1.6" fill="#fff"/><rect x="16.4" y="16" width="2" height="1.6" fill="#fff"/></svg>
<div class="c cc k-normal" style="left:122px;top:366px;width:58px;letter-spacing:-0.65px;"><span>100%</span></div>
<div class="c cc k-normal" style="left:181px;top:366px;width:58px;letter-spacing:-0.65px;"><span>100%</span></div>
<div class="ci" style="left:259px;top:368px;background:#2f8e47;border:1.6px solid #86cf92;background-clip:padding-box"></div>
<div class="c cr k-normal" style="left:299px;top:366px;width:58px;padding-right:2px;letter-spacing:0.15px;">5.2.1</div>
<div class="c k-normal" style="left:422px;top:366px;width:210px;letter-spacing:0.2px">Влаштування опалубки</div>
<div class="c cc k-normal" style="left:633px;top:366px;width:82px;letter-spacing:0.15px;"><span>2 днів</span></div>
<div class="c cc k-normal" style="left:716px;top:366px;width:82px;letter-spacing:0.15px;"><span>2 днів</span></div>
<div class="ci" style="left:802px;top:368px;background:#2f8e47;border:1.6px solid #86cf92;background-clip:padding-box"></div>
<div class="c cc k-normal" style="left:842px;top:366px;width:98px;letter-spacing:0.15px;"><span>13.03.25</span></div>
<div class="c cc k-normal" style="left:941px;top:366px;width:122px;letter-spacing:0.15px;"><span>15.03.25</span></div>
<div class="ci" style="left:1067px;top:368px;background:#d42416;border:1.6px solid #ee7a84;background-clip:padding-box"></div>
<div class="c cr k-normal" style="left:1107px;top:366px;width:138px;padding-right:2px;letter-spacing:-0.2px;">60 000,00 ₴</div>
<div class="c cr k-normal" style="left:1246px;top:366px;width:139px;padding-right:2.5px;letter-spacing:-0.2px;">61 000,00 ₴</div>
<div class="ci" style="left:1388px;top:368px;background:#d42416;border:1.6px solid #ee7a84;background-clip:padding-box"></div>
<svg class="a" style="left:76px;top:399px" width="18" height="16" viewBox="0 0 18 16"><path d="M1.3 7.6 L6.3 12.8 L16.6 1.2" fill="none" stroke="#4a7cc0" stroke-width="3.4" stroke-linejoin="miter"/></svg>
<svg class="a" style="left:96.5px;top:396.3px" width="21" height="20" viewBox="0 0 21 20"><rect x="0.5" y="1.5" width="13" height="13.5" rx="1.2" fill="#fff" stroke="#000" stroke-width="1" shape-rendering="crispEdges"/><rect x="12.6" y="2.5" width="1.6" height="10" fill="#000"/><path d="M4.2 3.2 V1.2 Q4.2 0 5.4 0 H8.6 Q9.8 0 9.8 1.2 V3.2 Z" fill="#000"/><rect x="5.6" y="0.8" width="2.8" height="0.9" fill="#fff"/><path d="M2 9.5 H3.8 L5 11 L8 6.8 L10.8 3.8" stroke="#b00000" stroke-width="1.1" fill="none"/><rect x="7.7" y="9.5" width="12.6" height="10" fill="#a9a9a9" stroke="#000" stroke-width="1" shape-rendering="crispEdges"/><rect x="9.5" y="10.6" width="6.5" height="1" fill="#1a2a9a"/><rect x="9.2" y="13" width="2" height="1.6" fill="#fff"/><rect x="12.8" y="13" width="2" height="1.6" fill="#fff"/><rect x="16.4" y="13" width="2" height="1.6" fill="#fff"/><rect x="9.2" y="16" width="2" height="1.6" fill="#fff"/><rect x="12.8" y="16" width="2" height="1.6" fill="#fff"/><rect x="16.4" y="16" width="2" height="1.6" fill="#fff"/></svg>
<div class="c cc k-normal" style="left:122px;top:394px;width:58px;letter-spacing:-0.65px;"><span>100%</span></div>
<div class="c cc k-normal" style="left:181px;top:394px;width:58px;letter-spacing:-0.65px;"><span>100%</span></div>
<div class="ci" style="left:259px;top:396px;background:#2f8e47;border:1.6px solid #86cf92;background-clip:padding-box"></div>
<div class="c cr k-normal" style="left:299px;top:394px;width:58px;padding-right:2px;letter-spacing:0.15px;">5.2.2</div>
<div class="c k-normal" style="left:422px;top:394px;width:210px;letter-spacing:0.2px">Залиття бетону</div>
<div class="c cc k-normal" style="left:633px;top:394px;width:82px;letter-spacing:0.15px;"><span>0,5 днів</span></div>
<div class="c cc k-normal" style="left:716px;top:394px;width:82px;letter-spacing:0.15px;"><span>0,5 днів</span></div>
<div class="ci" style="left:802px;top:396px;background:#2f8e47;border:1.6px solid #86cf92;background-clip:padding-box"></div>
<div class="c cc k-normal" style="left:842px;top:394px;width:98px;letter-spacing:0.15px;"><span>14.03.25</span></div>
<div class="c cc k-normal" style="left:941px;top:394px;width:122px;letter-spacing:0.15px;"><span>17.03.25</span></div>
<div class="ci" style="left:1067px;top:396px;background:#d42416;border:1.6px solid #ee7a84;background-clip:padding-box"></div>
<div class="c cr k-normal" style="left:1107px;top:394px;width:138px;padding-right:2px;letter-spacing:-0.2px;">180 000,00 ₴</div>
<div class="c cr k-normal" style="left:1246px;top:394px;width:139px;padding-right:2.5px;letter-spacing:-0.2px;">186 000,00 ₴</div>
<div class="ci" style="left:1388px;top:396px;background:#d42416;border:1.6px solid #ee7a84;background-clip:padding-box"></div>
<svg class="a" style="left:87px;top:427px" width="18" height="16" viewBox="0 0 18 16"><path d="M1.3 7.6 L6.3 12.8 L16.6 1.2" fill="none" stroke="#4a7cc0" stroke-width="3.4" stroke-linejoin="miter"/></svg>
<div class="c cc k-normal" style="left:122px;top:422px;width:58px;letter-spacing:-0.65px;"><span>100%</span></div>
<div class="c cc k-normal" style="left:181px;top:422px;width:58px;letter-spacing:-0.65px;"><span>100%</span></div>
<div class="ci" style="left:259px;top:424px;background:#2f8e47;border:1.6px solid #86cf92;background-clip:padding-box"></div>
<div class="c cr k-normal" style="left:299px;top:422px;width:58px;padding-right:2px;letter-spacing:0.15px;">5.2.3</div>
<div class="c k-normal" style="left:422px;top:422px;width:210px;letter-spacing:0.2px">Висихання бетону</div>
<div class="c cc k-normal" style="left:633px;top:422px;width:82px;letter-spacing:0.15px;"><span>14 однів</span></div>
<div class="c cc k-normal" style="left:716px;top:422px;width:82px;letter-spacing:0.15px;"><span>12 однів</span></div>
<div class="ci" style="left:802px;top:424px;background:#2f8e47;border:1.6px solid #86cf92;background-clip:padding-box"></div>
<div class="c cc k-normal" style="left:842px;top:422px;width:98px;letter-spacing:0.15px;"><span>28.03.25</span></div>
<div class="c cc k-normal" style="left:941px;top:422px;width:122px;letter-spacing:0.15px;"><span>29.03.25</span></div>
<div class="ci" style="left:1067px;top:424px;background:#d42416;border:1.6px solid #ee7a84;background-clip:padding-box"></div>
<div class="c cr k-normal" style="left:1107px;top:422px;width:138px;padding-right:2px;letter-spacing:-0.2px;">0,00 ₴</div>
<div class="c cr k-normal" style="left:1246px;top:422px;width:139px;padding-right:2.5px;letter-spacing:-0.2px;">0,00 ₴</div>
<div class="ci" style="left:1388px;top:424px;background:#2f8e47;border:1.6px solid #86cf92;background-clip:padding-box"></div>
<svg class="a" style="left:76px;top:455px" width="18" height="16" viewBox="0 0 18 16"><path d="M1.3 7.6 L6.3 12.8 L16.6 1.2" fill="none" stroke="#4a7cc0" stroke-width="3.4" stroke-linejoin="miter"/></svg>
<svg class="a" style="left:96.5px;top:452.3px" width="21" height="20" viewBox="0 0 21 20"><rect x="0.5" y="1.5" width="13" height="13.5" rx="1.2" fill="#fff" stroke="#000" stroke-width="1" shape-rendering="crispEdges"/><rect x="12.6" y="2.5" width="1.6" height="10" fill="#000"/><path d="M4.2 3.2 V1.2 Q4.2 0 5.4 0 H8.6 Q9.8 0 9.8 1.2 V3.2 Z" fill="#000"/><rect x="5.6" y="0.8" width="2.8" height="0.9" fill="#fff"/><path d="M2 9.5 H3.8 L5 11 L8 6.8 L10.8 3.8" stroke="#b00000" stroke-width="1.1" fill="none"/><rect x="7.7" y="9.5" width="12.6" height="10" fill="#a9a9a9" stroke="#000" stroke-width="1" shape-rendering="crispEdges"/><rect x="9.5" y="10.6" width="6.5" height="1" fill="#1a2a9a"/><rect x="9.2" y="13" width="2" height="1.6" fill="#fff"/><rect x="12.8" y="13" width="2" height="1.6" fill="#fff"/><rect x="16.4" y="13" width="2" height="1.6" fill="#fff"/><rect x="9.2" y="16" width="2" height="1.6" fill="#fff"/><rect x="12.8" y="16" width="2" height="1.6" fill="#fff"/><rect x="16.4" y="16" width="2" height="1.6" fill="#fff"/></svg>
<div class="c cc k-normal" style="left:122px;top:450px;width:58px;letter-spacing:-0.65px;"><span>100%</span></div>
<div class="c cc k-normal" style="left:181px;top:450px;width:58px;letter-spacing:-0.65px;"><span>100%</span></div>
<div class="ci" style="left:259px;top:452px;background:#2f8e47;border:1.6px solid #86cf92;background-clip:padding-box"></div>
<div class="c cr k-normal" style="left:299px;top:450px;width:58px;padding-right:2px;letter-spacing:0.15px;">5.2.4</div>
<div class="c k-normal" style="left:422px;top:450px;width:210px;letter-spacing:0.2px">Демонтаж опалубки</div>
<div class="c cc k-normal" style="left:633px;top:450px;width:82px;letter-spacing:0.15px;"><span>2 днів</span></div>
<div class="c cc k-normal" style="left:716px;top:450px;width:82px;letter-spacing:0.15px;"><span>1 день</span></div>
<div class="ci" style="left:802px;top:452px;background:#2f8e47;border:1.6px solid #86cf92;background-clip:padding-box"></div>
<div class="c cc k-normal" style="left:842px;top:450px;width:98px;letter-spacing:0.15px;"><span>31.03.25</span></div>
<div class="c cc k-normal" style="left:941px;top:450px;width:122px;letter-spacing:0.15px;"><span>31.03.25</span></div>
<div class="ci" style="left:1067px;top:452px;background:#d42416;border:1.6px solid #ee7a84;background-clip:padding-box"></div>
<div class="c cr k-normal" style="left:1107px;top:450px;width:138px;padding-right:2px;letter-spacing:-0.2px;">8 000,00 ₴</div>
<div class="c cr k-normal" style="left:1246px;top:450px;width:139px;padding-right:2.5px;letter-spacing:-0.2px;">4 000,00 ₴</div>
<div class="ci" style="left:1388px;top:452px;background:#2f8e47;border:1.6px solid #86cf92;background-clip:padding-box"></div>
<svg class="a" style="left:76px;top:483px" width="18" height="16" viewBox="0 0 18 16"><path d="M1.3 7.6 L6.3 12.8 L16.6 1.2" fill="none" stroke="#4a7cc0" stroke-width="3.4" stroke-linejoin="miter"/></svg>
<svg class="a" style="left:96.5px;top:480.3px" width="21" height="20" viewBox="0 0 21 20"><rect x="0.5" y="1.5" width="13" height="13.5" rx="1.2" fill="#fff" stroke="#000" stroke-width="1" shape-rendering="crispEdges"/><rect x="12.6" y="2.5" width="1.6" height="10" fill="#000"/><path d="M4.2 3.2 V1.2 Q4.2 0 5.4 0 H8.6 Q9.8 0 9.8 1.2 V3.2 Z" fill="#000"/><rect x="5.6" y="0.8" width="2.8" height="0.9" fill="#fff"/><path d="M2 9.5 H3.8 L5 11 L8 6.8 L10.8 3.8" stroke="#b00000" stroke-width="1.1" fill="none"/><rect x="7.7" y="9.5" width="12.6" height="10" fill="#a9a9a9" stroke="#000" stroke-width="1" shape-rendering="crispEdges"/><rect x="9.5" y="10.6" width="6.5" height="1" fill="#1a2a9a"/><rect x="9.2" y="13" width="2" height="1.6" fill="#fff"/><rect x="12.8" y="13" width="2" height="1.6" fill="#fff"/><rect x="16.4" y="13" width="2" height="1.6" fill="#fff"/><rect x="9.2" y="16" width="2" height="1.6" fill="#fff"/><rect x="12.8" y="16" width="2" height="1.6" fill="#fff"/><rect x="16.4" y="16" width="2" height="1.6" fill="#fff"/></svg>
<div class="c cc k-milestone" style="left:122px;top:478px;width:58px;letter-spacing:-0.65px;"><span>100%</span></div>
<div class="c cc k-milestone" style="left:181px;top:478px;width:58px;letter-spacing:-0.65px;"><span>100%</span></div>
<div class="ci" style="left:259px;top:480px;background:#2f8e47;border:1.6px solid #86cf92;background-clip:padding-box"></div>
<div class="c cr k-milestone" style="left:299px;top:478px;width:58px;padding-right:2px;letter-spacing:0.15px;">5.2.5</div>
<div class="c k-milestone" style="left:422px;top:478px;width:210px;letter-spacing:0.2px">Фундамент готовий</div>
<div class="c cc k-milestone" style="left:633px;top:478px;width:82px;letter-spacing:0.15px;"><span>0 днів</span></div>
<div class="c cc k-milestone" style="left:716px;top:478px;width:82px;letter-spacing:0.15px;"><span>0 днів</span></div>
<div class="ci" style="left:802px;top:480px;background:#2f8e47;border:1.6px solid #86cf92;background-clip:padding-box"></div>
<div class="c cc k-milestone" style="left:842px;top:478px;width:98px;letter-spacing:0.15px;"><span>31.03.25</span></div>
<div class="c cc k-milestone" style="left:941px;top:478px;width:122px;letter-spacing:0.15px;"><span>29.03.25</span></div>
<div class="ci" style="left:1067px;top:480px;background:#2f8e47;border:1.6px solid #86cf92;background-clip:padding-box"></div>
<div class="c cr k-milestone" style="left:1107px;top:478px;width:138px;padding-right:2px;letter-spacing:-0.2px;">0,00 ₴</div>
<div class="c cr k-milestone" style="left:1246px;top:478px;width:139px;padding-right:2.5px;letter-spacing:-0.2px;">0,00 ₴</div>
<div class="ci" style="left:1388px;top:480px;background:#2f8e47;border:1.6px solid #86cf92;background-clip:padding-box"></div>
<svg class="a" style="left:85px;top:508.3px" width="21" height="20" viewBox="0 0 21 20"><rect x="0.5" y="1.5" width="13" height="13.5" rx="1.2" fill="#fff" stroke="#000" stroke-width="1" shape-rendering="crispEdges"/><rect x="12.6" y="2.5" width="1.6" height="10" fill="#000"/><path d="M4.2 3.2 V1.2 Q4.2 0 5.4 0 H8.6 Q9.8 0 9.8 1.2 V3.2 Z" fill="#000"/><rect x="5.6" y="0.8" width="2.8" height="0.9" fill="#fff"/><path d="M2 9.5 H3.8 L5 11 L8 6.8 L10.8 3.8" stroke="#b00000" stroke-width="1.1" fill="none"/><rect x="7.7" y="9.5" width="12.6" height="10" fill="#a9a9a9" stroke="#000" stroke-width="1" shape-rendering="crispEdges"/><rect x="9.5" y="10.6" width="6.5" height="1" fill="#1a2a9a"/><rect x="9.2" y="13" width="2" height="1.6" fill="#fff"/><rect x="12.8" y="13" width="2" height="1.6" fill="#fff"/><rect x="16.4" y="13" width="2" height="1.6" fill="#fff"/><rect x="9.2" y="16" width="2" height="1.6" fill="#fff"/><rect x="12.8" y="16" width="2" height="1.6" fill="#fff"/><rect x="16.4" y="16" width="2" height="1.6" fill="#fff"/></svg>
<div class="c cc k-summary" style="left:122px;top:506px;width:58px;letter-spacing:-0.65px;"><span>100%</span></div>
<div class="c cc k-summary" style="left:181px;top:506px;width:58px;letter-spacing:-0.65px;"><span>59%</span></div>
<div class="ci" style="left:259px;top:508px;background:#d42416;border:1.6px solid #ee7a84;background-clip:padding-box"></div>
<div class="c cr k-summary" style="left:299px;top:506px;width:58px;padding-right:2px;letter-spacing:0.15px;">5.3</div>
<svg class="a" style="left:394px;top:517px" width="7" height="7" viewBox="0 0 7 7"><path d="M6.5 0.5 V6.5 H0.5 Z" fill="#404040"/></svg>
<div class="c k-summary" style="left:406px;top:506px;width:226px;letter-spacing:0.2px">Каркас</div>
<div class="c cc k-summary" style="left:633px;top:506px;width:82px;letter-spacing:0.15px;"><span>16,5 днів</span></div>
<div class="c cc k-summary" style="left:716px;top:506px;width:82px;letter-spacing:0.15px;"><span>16,5 днів</span></div>
<div class="ci" style="left:802px;top:508px;background:#2f8e47;border:1.6px solid #86cf92;background-clip:padding-box"></div>
<div class="c cc k-summary" style="left:842px;top:506px;width:98px;letter-spacing:0.15px;"><span>18.04.25</span></div>
<div class="c cc k-summary" style="left:941px;top:506px;width:122px;letter-spacing:0.15px;"><span>17.04.25</span></div>
<div class="ci" style="left:1067px;top:508px;background:#2f8e47;border:1.6px solid #86cf92;background-clip:padding-box"></div>
<div class="c cr k-summary" style="left:1107px;top:506px;width:138px;padding-right:2px;letter-spacing:-0.2px;">1 773 800,00 ₴</div>
<div class="c cr k-summary" style="left:1246px;top:506px;width:139px;padding-right:2.5px;letter-spacing:-0.2px;">1 773 800,00 ₴</div>
<div class="ci" style="left:1388px;top:508px;background:#2f8e47;border:1.6px solid #86cf92;background-clip:padding-box"></div>
<svg class="a" style="left:76px;top:539px" width="18" height="16" viewBox="0 0 18 16"><path d="M1.3 7.6 L6.3 12.8 L16.6 1.2" fill="none" stroke="#4a7cc0" stroke-width="3.4" stroke-linejoin="miter"/></svg>
<svg class="a" style="left:96.5px;top:536.3px" width="21" height="20" viewBox="0 0 21 20"><rect x="0.5" y="1.5" width="13" height="13.5" rx="1.2" fill="#fff" stroke="#000" stroke-width="1" shape-rendering="crispEdges"/><rect x="12.6" y="2.5" width="1.6" height="10" fill="#000"/><path d="M4.2 3.2 V1.2 Q4.2 0 5.4 0 H8.6 Q9.8 0 9.8 1.2 V3.2 Z" fill="#000"/><rect x="5.6" y="0.8" width="2.8" height="0.9" fill="#fff"/><path d="M2 9.5 H3.8 L5 11 L8 6.8 L10.8 3.8" stroke="#b00000" stroke-width="1.1" fill="none"/><rect x="7.7" y="9.5" width="12.6" height="10" fill="#a9a9a9" stroke="#000" stroke-width="1" shape-rendering="crispEdges"/><rect x="9.5" y="10.6" width="6.5" height="1" fill="#1a2a9a"/><rect x="9.2" y="13" width="2" height="1.6" fill="#fff"/><rect x="12.8" y="13" width="2" height="1.6" fill="#fff"/><rect x="16.4" y="13" width="2" height="1.6" fill="#fff"/><rect x="9.2" y="16" width="2" height="1.6" fill="#fff"/><rect x="12.8" y="16" width="2" height="1.6" fill="#fff"/><rect x="16.4" y="16" width="2" height="1.6" fill="#fff"/></svg>
<div class="c cc k-normal" style="left:122px;top:534px;width:58px;letter-spacing:-0.65px;"><span>100%</span></div>
<div class="c cc k-normal" style="left:181px;top:534px;width:58px;letter-spacing:-0.65px;"><span>100%</span></div>
<div class="ci" style="left:259px;top:536px;background:#2f8e47;border:1.6px solid #86cf92;background-clip:padding-box"></div>
<div class="c cr k-normal" style="left:299px;top:534px;width:58px;padding-right:2px;letter-spacing:0.15px;">5.3.1</div>
<div class="c k-normal" style="left:422px;top:534px;width:210px;letter-spacing:0.2px">Кладка зовнішніх стін</div>
<div class="c cc k-normal" style="left:633px;top:534px;width:82px;letter-spacing:0.15px;"><span>5 днів</span></div>
<div class="c cc k-normal" style="left:716px;top:534px;width:82px;letter-spacing:0.15px;"><span>5 днів</span></div>
<div class="ci" style="left:802px;top:536px;background:#2f8e47;border:1.6px solid #86cf92;background-clip:padding-box"></div>
<div class="c cc k-normal" style="left:842px;top:534px;width:98px;letter-spacing:0.15px;"><span>05.04.25</span></div>
<div class="c cc k-normal" style="left:941px;top:534px;width:122px;letter-spacing:0.15px;"><span>03.04.25</span></div>
<div class="ci" style="left:1067px;top:536px;background:#2f8e47;border:1.6px solid #86cf92;background-clip:padding-box"></div>
<div class="c cr k-normal" style="left:1107px;top:534px;width:138px;padding-right:2px;letter-spacing:-0.2px;">529 000,00 ₴</div>
<div class="c cr k-normal" style="left:1246px;top:534px;width:139px;padding-right:2.5px;letter-spacing:-0.2px;">529 000,00 ₴</div>
<div class="ci" style="left:1388px;top:536px;background:#2f8e47;border:1.6px solid #86cf92;background-clip:padding-box"></div>
<svg class="a" style="left:76px;top:567px" width="18" height="16" viewBox="0 0 18 16"><path d="M1.3 7.6 L6.3 12.8 L16.6 1.2" fill="none" stroke="#4a7cc0" stroke-width="3.4" stroke-linejoin="miter"/></svg>
<svg class="a" style="left:96.5px;top:564.3px" width="21" height="20" viewBox="0 0 21 20"><rect x="0.5" y="1.5" width="13" height="13.5" rx="1.2" fill="#fff" stroke="#000" stroke-width="1" shape-rendering="crispEdges"/><rect x="12.6" y="2.5" width="1.6" height="10" fill="#000"/><path d="M4.2 3.2 V1.2 Q4.2 0 5.4 0 H8.6 Q9.8 0 9.8 1.2 V3.2 Z" fill="#000"/><rect x="5.6" y="0.8" width="2.8" height="0.9" fill="#fff"/><path d="M2 9.5 H3.8 L5 11 L8 6.8 L10.8 3.8" stroke="#b00000" stroke-width="1.1" fill="none"/><rect x="7.7" y="9.5" width="12.6" height="10" fill="#a9a9a9" stroke="#000" stroke-width="1" shape-rendering="crispEdges"/><rect x="9.5" y="10.6" width="6.5" height="1" fill="#1a2a9a"/><rect x="9.2" y="13" width="2" height="1.6" fill="#fff"/><rect x="12.8" y="13" width="2" height="1.6" fill="#fff"/><rect x="16.4" y="13" width="2" height="1.6" fill="#fff"/><rect x="9.2" y="16" width="2" height="1.6" fill="#fff"/><rect x="12.8" y="16" width="2" height="1.6" fill="#fff"/><rect x="16.4" y="16" width="2" height="1.6" fill="#fff"/></svg>
<div class="c cc k-normal" style="left:122px;top:562px;width:58px;letter-spacing:-0.65px;"><span>100%</span></div>
<div class="c cc k-normal" style="left:181px;top:562px;width:58px;letter-spacing:-0.65px;"><span>100%</span></div>
<div class="ci" style="left:259px;top:564px;background:#2f8e47;border:1.6px solid #86cf92;background-clip:padding-box"></div>
<div class="c cr k-normal" style="left:299px;top:562px;width:58px;padding-right:2px;letter-spacing:0.15px;">5.3.2</div>
<div class="c k-normal" style="left:422px;top:562px;width:210px;letter-spacing:0.2px">Кладка внутрішніх стін</div>
<div class="c cc k-normal" style="left:633px;top:562px;width:82px;letter-spacing:0.15px;"><span>5 днів</span></div>
<div class="c cc k-normal" style="left:716px;top:562px;width:82px;letter-spacing:0.15px;"><span>5 днів</span></div>
<div class="ci" style="left:802px;top:564px;background:#2f8e47;border:1.6px solid #86cf92;background-clip:padding-box"></div>
<div class="c cc k-normal" style="left:842px;top:562px;width:98px;letter-spacing:0.15px;"><span>05.04.25</span></div>
<div class="c cc k-normal" style="left:941px;top:562px;width:122px;letter-spacing:0.15px;"><span>03.04.25</span></div>
<div class="ci" style="left:1067px;top:564px;background:#2f8e47;border:1.6px solid #86cf92;background-clip:padding-box"></div>
<div class="c cr k-normal" style="left:1107px;top:562px;width:138px;padding-right:2px;letter-spacing:-0.2px;">304 000,00 ₴</div>
<div class="c cr k-normal" style="left:1246px;top:562px;width:139px;padding-right:2.5px;letter-spacing:-0.2px;">304 000,00 ₴</div>
<div class="ci" style="left:1388px;top:564px;background:#2f8e47;border:1.6px solid #86cf92;background-clip:padding-box"></div>
<svg class="a" style="left:85px;top:592.3px" width="21" height="20" viewBox="0 0 21 20"><rect x="0.5" y="1.5" width="13" height="13.5" rx="1.2" fill="#fff" stroke="#000" stroke-width="1" shape-rendering="crispEdges"/><rect x="12.6" y="2.5" width="1.6" height="10" fill="#000"/><path d="M4.2 3.2 V1.2 Q4.2 0 5.4 0 H8.6 Q9.8 0 9.8 1.2 V3.2 Z" fill="#000"/><rect x="5.6" y="0.8" width="2.8" height="0.9" fill="#fff"/><path d="M2 9.5 H3.8 L5 11 L8 6.8 L10.8 3.8" stroke="#b00000" stroke-width="1.1" fill="none"/><rect x="7.7" y="9.5" width="12.6" height="10" fill="#a9a9a9" stroke="#000" stroke-width="1" shape-rendering="crispEdges"/><rect x="9.5" y="10.6" width="6.5" height="1" fill="#1a2a9a"/><rect x="9.2" y="13" width="2" height="1.6" fill="#fff"/><rect x="12.8" y="13" width="2" height="1.6" fill="#fff"/><rect x="16.4" y="13" width="2" height="1.6" fill="#fff"/><rect x="9.2" y="16" width="2" height="1.6" fill="#fff"/><rect x="12.8" y="16" width="2" height="1.6" fill="#fff"/><rect x="16.4" y="16" width="2" height="1.6" fill="#fff"/></svg>
<div class="c cc k-normal" style="left:122px;top:590px;width:58px;letter-spacing:-0.65px;"><span>100%</span></div>
<div class="c cc k-normal" style="left:181px;top:590px;width:58px;letter-spacing:-0.65px;"><span>50%</span></div>
<div class="ci" style="left:259px;top:592px;background:#d4d4d4;border:1.6px solid #d2d2d2;background-clip:padding-box"></div>
<div class="c cr k-normal" style="left:299px;top:590px;width:58px;padding-right:2px;letter-spacing:0.15px;">5.3.3</div>
<div class="c k-normal" style="left:422px;top:590px;width:210px;letter-spacing:0.2px">Влаштування перекриття</div>
<div class="c cc k-normal" style="left:633px;top:590px;width:82px;letter-spacing:0.15px;"><span>5,5 днів</span></div>
<div class="c cc k-normal" style="left:716px;top:590px;width:82px;letter-spacing:0.15px;"><span>5,5 днів</span></div>
<div class="ci" style="left:802px;top:592px;background:#2f8e47;border:1.6px solid #86cf92;background-clip:padding-box"></div>
<div class="c cc k-normal" style="left:842px;top:590px;width:98px;letter-spacing:0.15px;"><span>11.04.25</span></div>
<div class="c cc k-normal" style="left:941px;top:590px;width:122px;letter-spacing:0.15px;"><span>10.04.25</span></div>
<div class="ci" style="left:1067px;top:592px;background:#2f8e47;border:1.6px solid #86cf92;background-clip:padding-box"></div>
<div class="c cr k-normal" style="left:1107px;top:590px;width:138px;padding-right:2px;letter-spacing:-0.2px;">316 800,00 ₴</div>
<div class="c cr k-normal" style="left:1246px;top:590px;width:139px;padding-right:2.5px;letter-spacing:-0.2px;">316 800,00 ₴</div>
<div class="ci" style="left:1388px;top:592px;background:#2f8e47;border:1.6px solid #86cf92;background-clip:padding-box"></div>
<svg class="a" style="left:85px;top:620.3px" width="21" height="20" viewBox="0 0 21 20"><rect x="0.5" y="1.5" width="13" height="13.5" rx="1.2" fill="#fff" stroke="#000" stroke-width="1" shape-rendering="crispEdges"/><rect x="12.6" y="2.5" width="1.6" height="10" fill="#000"/><path d="M4.2 3.2 V1.2 Q4.2 0 5.4 0 H8.6 Q9.8 0 9.8 1.2 V3.2 Z" fill="#000"/><rect x="5.6" y="0.8" width="2.8" height="0.9" fill="#fff"/><path d="M2 9.5 H3.8 L5 11 L8 6.8 L10.8 3.8" stroke="#b00000" stroke-width="1.1" fill="none"/><rect x="7.7" y="9.5" width="12.6" height="10" fill="#a9a9a9" stroke="#000" stroke-width="1" shape-rendering="crispEdges"/><rect x="9.5" y="10.6" width="6.5" height="1" fill="#1a2a9a"/><rect x="9.2" y="13" width="2" height="1.6" fill="#fff"/><rect x="12.8" y="13" width="2" height="1.6" fill="#fff"/><rect x="16.4" y="13" width="2" height="1.6" fill="#fff"/><rect x="9.2" y="16" width="2" height="1.6" fill="#fff"/><rect x="12.8" y="16" width="2" height="1.6" fill="#fff"/><rect x="16.4" y="16" width="2" height="1.6" fill="#fff"/></svg>
<div class="c cc k-normal" style="left:122px;top:618px;width:58px;letter-spacing:-0.65px;"><span>100%</span></div>
<div class="c cc k-normal" style="left:181px;top:618px;width:58px;letter-spacing:-0.65px;"><span>0%</span></div>
<div class="ci" style="left:259px;top:620px;background:#d4d4d4;border:1.6px solid #d2d2d2;background-clip:padding-box"></div>
<div class="c cr k-normal" style="left:299px;top:618px;width:58px;padding-right:2px;letter-spacing:0.15px;">5.3.4</div>
<div class="c k-normal" style="left:422px;top:618px;width:210px;letter-spacing:0.2px">Влаштування даху</div>
<div class="c cc k-normal" style="left:633px;top:618px;width:82px;letter-spacing:0.15px;"><span>6 днів</span></div>
<div class="c cc k-normal" style="left:716px;top:618px;width:82px;letter-spacing:0.15px;"><span>6 днів</span></div>
<div class="ci" style="left:802px;top:620px;background:#2f8e47;border:1.6px solid #86cf92;background-clip:padding-box"></div>
<div class="c cc k-normal" style="left:842px;top:618px;width:98px;letter-spacing:0.15px;"><span>18.04.25</span></div>
<div class="c cc k-normal" style="left:941px;top:618px;width:122px;letter-spacing:0.15px;"><span>17.04.25</span></div>
<div class="ci" style="left:1067px;top:620px;background:#2f8e47;border:1.6px solid #86cf92;background-clip:padding-box"></div>
<div class="c cr k-normal" style="left:1107px;top:618px;width:138px;padding-right:2px;letter-spacing:-0.2px;">624 000,00 ₴</div>
<div class="c cr k-normal" style="left:1246px;top:618px;width:139px;padding-right:2.5px;letter-spacing:-0.2px;">624 000,00 ₴</div>
<div class="ci" style="left:1388px;top:620px;background:#2f8e47;border:1.6px solid #86cf92;background-clip:padding-box"></div>
<svg class="a" style="left:75.5px;top:648.5px" width="18" height="18" viewBox="0 0 18 18"><path d="M9 1.8 L16.2 9 L9 16.2 L1.8 9 Z" fill="#e05a32" stroke="#e05a32" stroke-width="2.4" stroke-linejoin="round"/><rect x="8" y="4.5" width="2" height="6.2" fill="#fff"/><rect x="8" y="12" width="2" height="1.9" fill="#fff"/></svg>
<svg class="a" style="left:96.5px;top:648.3px" width="21" height="20" viewBox="0 0 21 20"><rect x="0.5" y="1.5" width="13" height="13.5" rx="1.2" fill="#fff" stroke="#000" stroke-width="1" shape-rendering="crispEdges"/><rect x="12.6" y="2.5" width="1.6" height="10" fill="#000"/><path d="M4.2 3.2 V1.2 Q4.2 0 5.4 0 H8.6 Q9.8 0 9.8 1.2 V3.2 Z" fill="#000"/><rect x="5.6" y="0.8" width="2.8" height="0.9" fill="#fff"/><path d="M2 9.5 H3.8 L5 11 L8 6.8 L10.8 3.8" stroke="#b00000" stroke-width="1.1" fill="none"/><rect x="7.7" y="9.5" width="12.6" height="10" fill="#a9a9a9" stroke="#000" stroke-width="1" shape-rendering="crispEdges"/><rect x="9.5" y="10.6" width="6.5" height="1" fill="#1a2a9a"/><rect x="9.2" y="13" width="2" height="1.6" fill="#fff"/><rect x="12.8" y="13" width="2" height="1.6" fill="#fff"/><rect x="16.4" y="13" width="2" height="1.6" fill="#fff"/><rect x="9.2" y="16" width="2" height="1.6" fill="#fff"/><rect x="12.8" y="16" width="2" height="1.6" fill="#fff"/><rect x="16.4" y="16" width="2" height="1.6" fill="#fff"/></svg>
<div class="c cc k-milestone" style="left:122px;top:646px;width:58px;letter-spacing:-0.65px;"><span>100%</span></div>
<div class="c cc k-milestone" style="left:181px;top:646px;width:58px;letter-spacing:-0.65px;"><span>0%</span></div>
<div class="ci" style="left:259px;top:648px;background:#d4d4d4;border:1.6px solid #d2d2d2;background-clip:padding-box"></div>
<div class="c cr k-milestone" style="left:299px;top:646px;width:58px;padding-right:2px;letter-spacing:0.15px;">5.3.5</div>
<div class="c k-milestone" style="left:422px;top:646px;width:210px;letter-spacing:0.2px">Каркас  готовий</div>
<div class="c cc k-milestone" style="left:633px;top:646px;width:82px;letter-spacing:0.15px;"><span>0 днів</span></div>
<div class="c cc k-milestone" style="left:716px;top:646px;width:82px;letter-spacing:0.15px;"><span>0 днів</span></div>
<div class="ci" style="left:802px;top:648px;background:#2f8e47;border:1.6px solid #86cf92;background-clip:padding-box"></div>
<div class="c cc k-milestone" style="left:842px;top:646px;width:98px;letter-spacing:0.15px;"><span>18.04.25</span></div>
<div class="c cc k-milestone" style="left:941px;top:646px;width:122px;letter-spacing:0.15px;"><span>17.04.25</span></div>
<div class="ci" style="left:1067px;top:648px;background:#2f8e47;border:1.6px solid #86cf92;background-clip:padding-box"></div>
<div class="c cr k-milestone" style="left:1107px;top:646px;width:138px;padding-right:2px;letter-spacing:-0.2px;">0,00 ₴</div>
<div class="c cr k-milestone" style="left:1246px;top:646px;width:139px;padding-right:2.5px;letter-spacing:-0.2px;">0,00 ₴</div>
<div class="ci" style="left:1388px;top:648px;background:#2f8e47;border:1.6px solid #86cf92;background-clip:padding-box"></div>
<svg class="a" style="left:85px;top:676.3px" width="21" height="20" viewBox="0 0 21 20"><rect x="0.5" y="1.5" width="13" height="13.5" rx="1.2" fill="#fff" stroke="#000" stroke-width="1" shape-rendering="crispEdges"/><rect x="12.6" y="2.5" width="1.6" height="10" fill="#000"/><path d="M4.2 3.2 V1.2 Q4.2 0 5.4 0 H8.6 Q9.8 0 9.8 1.2 V3.2 Z" fill="#000"/><rect x="5.6" y="0.8" width="2.8" height="0.9" fill="#fff"/><path d="M2 9.5 H3.8 L5 11 L8 6.8 L10.8 3.8" stroke="#b00000" stroke-width="1.1" fill="none"/><rect x="7.7" y="9.5" width="12.6" height="10" fill="#a9a9a9" stroke="#000" stroke-width="1" shape-rendering="crispEdges"/><rect x="9.5" y="10.6" width="6.5" height="1" fill="#1a2a9a"/><rect x="9.2" y="13" width="2" height="1.6" fill="#fff"/><rect x="12.8" y="13" width="2" height="1.6" fill="#fff"/><rect x="16.4" y="13" width="2" height="1.6" fill="#fff"/><rect x="9.2" y="16" width="2" height="1.6" fill="#fff"/><rect x="12.8" y="16" width="2" height="1.6" fill="#fff"/><rect x="16.4" y="16" width="2" height="1.6" fill="#fff"/></svg>
<div class="c cc k-summary" style="left:122px;top:674px;width:58px;letter-spacing:-0.65px;"><span>100%</span></div>
<div class="c cc k-summary" style="left:181px;top:674px;width:58px;letter-spacing:-0.65px;"><span>0%</span></div>
<div class="ci" style="left:259px;top:676px;background:#d4d4d4;border:1.6px solid #d2d2d2;background-clip:padding-box"></div>
<div class="c cr k-summary" style="left:299px;top:674px;width:58px;padding-right:2px;letter-spacing:0.15px;">5.4</div>
<svg class="a" style="left:394px;top:683px" width="7" height="10" viewBox="0 0 7 10"><path d="M1 1 L6 5 L1 9 Z" fill="#fff" stroke="#8a8a8a" stroke-width="1"/></svg>
<div class="c k-summary" style="left:406px;top:674px;width:226px;letter-spacing:0.2px">Мережі</div>
<div class="c cc k-summary" style="left:633px;top:674px;width:82px;letter-spacing:0.15px;"><span>10 днів</span></div>
<div class="c cc k-summary" style="left:716px;top:674px;width:82px;letter-spacing:0.15px;"><span>10 днів</span></div>
<div class="ci" style="left:802px;top:676px;background:#2f8e47;border:1.6px solid #86cf92;background-clip:padding-box"></div>
<div class="c cc k-summary" style="left:842px;top:674px;width:98px;letter-spacing:0.15px;"><span>30.04.25</span></div>
<div class="c cc k-summary" style="left:941px;top:674px;width:122px;letter-spacing:0.15px;"><span>29.04.25</span></div>
<div class="ci" style="left:1067px;top:676px;background:#2f8e47;border:1.6px solid #86cf92;background-clip:padding-box"></div>
<div class="c cr k-summary" style="left:1107px;top:674px;width:138px;padding-right:2px;letter-spacing:-0.2px;">183 500,00 ₴</div>
<div class="c cr k-summary" style="left:1246px;top:674px;width:139px;padding-right:2.5px;letter-spacing:-0.2px;">183 500,00 ₴</div>
<div class="ci" style="left:1388px;top:676px;background:#2f8e47;border:1.6px solid #86cf92;background-clip:padding-box"></div>
<svg class="a" style="left:85px;top:704.3px" width="21" height="20" viewBox="0 0 21 20"><rect x="0.5" y="1.5" width="13" height="13.5" rx="1.2" fill="#fff" stroke="#000" stroke-width="1" shape-rendering="crispEdges"/><rect x="12.6" y="2.5" width="1.6" height="10" fill="#000"/><path d="M4.2 3.2 V1.2 Q4.2 0 5.4 0 H8.6 Q9.8 0 9.8 1.2 V3.2 Z" fill="#000"/><rect x="5.6" y="0.8" width="2.8" height="0.9" fill="#fff"/><path d="M2 9.5 H3.8 L5 11 L8 6.8 L10.8 3.8" stroke="#b00000" stroke-width="1.1" fill="none"/><rect x="7.7" y="9.5" width="12.6" height="10" fill="#a9a9a9" stroke="#000" stroke-width="1" shape-rendering="crispEdges"/><rect x="9.5" y="10.6" width="6.5" height="1" fill="#1a2a9a"/><rect x="9.2" y="13" width="2" height="1.6" fill="#fff"/><rect x="12.8" y="13" width="2" height="1.6" fill="#fff"/><rect x="16.4" y="13" width="2" height="1.6" fill="#fff"/><rect x="9.2" y="16" width="2" height="1.6" fill="#fff"/><rect x="12.8" y="16" width="2" height="1.6" fill="#fff"/><rect x="16.4" y="16" width="2" height="1.6" fill="#fff"/></svg>
<div class="c cc k-summary" style="left:122px;top:702px;width:58px;letter-spacing:-0.65px;"><span>1%</span></div>
<div class="c cc k-summary" style="left:181px;top:702px;width:58px;letter-spacing:-0.65px;"><span>0%</span></div>
<div class="ci" style="left:259px;top:704px;background:#2f8e47;border:1.6px solid #86cf92;background-clip:padding-box"></div>
<div class="c cr k-summary" style="left:299px;top:702px;width:58px;padding-right:2px;letter-spacing:0.15px;">5.5</div>
<svg class="a" style="left:394px;top:711px" width="7" height="10" viewBox="0 0 7 10"><path d="M1 1 L6 5 L1 9 Z" fill="#fff" stroke="#8a8a8a" stroke-width="1"/></svg>
<div class="c k-summary" style="left:406px;top:702px;width:226px;letter-spacing:0.2px">Чорнове оздоблення</div>
<div class="c cc k-summary" style="left:633px;top:702px;width:82px;letter-spacing:0.15px;"><span>14 днів</span></div>
<div class="c cc k-summary" style="left:716px;top:702px;width:82px;letter-spacing:0.15px;"><span>14 днів</span></div>
<div class="ci" style="left:802px;top:704px;background:#2f8e47;border:1.6px solid #86cf92;background-clip:padding-box"></div>
<div class="c cc k-summary" style="left:842px;top:702px;width:98px;letter-spacing:0.15px;"><span>21.05.25</span></div>
<div class="c cc k-summary" style="left:941px;top:702px;width:122px;letter-spacing:0.15px;"><span>20.05.25</span></div>
<div class="ci" style="left:1067px;top:704px;background:#2f8e47;border:1.6px solid #86cf92;background-clip:padding-box"></div>
<div class="c cr k-summary" style="left:1107px;top:702px;width:138px;padding-right:2px;letter-spacing:-0.2px;">188 000,00 ₴</div>
<div class="c cr k-summary" style="left:1246px;top:702px;width:139px;padding-right:2.5px;letter-spacing:-0.2px;">188 000,00 ₴</div>
<div class="ci" style="left:1388px;top:704px;background:#2f8e47;border:1.6px solid #86cf92;background-clip:padding-box"></div>
<svg class="a" style="left:85px;top:732.3px" width="21" height="20" viewBox="0 0 21 20"><rect x="0.5" y="1.5" width="13" height="13.5" rx="1.2" fill="#fff" stroke="#000" stroke-width="1" shape-rendering="crispEdges"/><rect x="12.6" y="2.5" width="1.6" height="10" fill="#000"/><path d="M4.2 3.2 V1.2 Q4.2 0 5.4 0 H8.6 Q9.8 0 9.8 1.2 V3.2 Z" fill="#000"/><rect x="5.6" y="0.8" width="2.8" height="0.9" fill="#fff"/><path d="M2 9.5 H3.8 L5 11 L8 6.8 L10.8 3.8" stroke="#b00000" stroke-width="1.1" fill="none"/><rect x="7.7" y="9.5" width="12.6" height="10" fill="#a9a9a9" stroke="#000" stroke-width="1" shape-rendering="crispEdges"/><rect x="9.5" y="10.6" width="6.5" height="1" fill="#1a2a9a"/><rect x="9.2" y="13" width="2" height="1.6" fill="#fff"/><rect x="12.8" y="13" width="2" height="1.6" fill="#fff"/><rect x="16.4" y="13" width="2" height="1.6" fill="#fff"/><rect x="9.2" y="16" width="2" height="1.6" fill="#fff"/><rect x="12.8" y="16" width="2" height="1.6" fill="#fff"/><rect x="16.4" y="16" width="2" height="1.6" fill="#fff"/></svg>
<div class="c cc k-summary" style="left:122px;top:730px;width:58px;letter-spacing:-0.65px;"><span>3%</span></div>
<div class="c cc k-summary" style="left:181px;top:730px;width:58px;letter-spacing:-0.65px;"><span>0%</span></div>
<div class="ci" style="left:259px;top:732px;background:#2f8e47;border:1.6px solid #86cf92;background-clip:padding-box"></div>
<div class="c cr k-summary" style="left:299px;top:730px;width:58px;padding-right:2px;letter-spacing:0.15px;">5.6</div>
<svg class="a" style="left:394px;top:739px" width="7" height="10" viewBox="0 0 7 10"><path d="M1 1 L6 5 L1 9 Z" fill="#fff" stroke="#8a8a8a" stroke-width="1"/></svg>
<div class="c k-summary" style="left:406px;top:730px;width:226px;letter-spacing:0.2px">Благоустрій</div>
<div class="c cc k-summary" style="left:633px;top:730px;width:82px;letter-spacing:0.15px;"><span>35 днів</span></div>
<div class="c cc k-summary" style="left:716px;top:730px;width:82px;letter-spacing:0.15px;"><span>35 днів</span></div>
<div class="ci" style="left:802px;top:732px;background:#2f8e47;border:1.6px solid #86cf92;background-clip:padding-box"></div>
<div class="c cc k-summary" style="left:842px;top:730px;width:98px;letter-spacing:0.15px;"><span>13.06.25</span></div>
<div class="c cc k-summary" style="left:941px;top:730px;width:122px;letter-spacing:0.15px;"><span>13.06.25</span></div>
<div class="c cr k-summary" style="left:1107px;top:730px;width:138px;padding-right:2px;letter-spacing:-0.2px;">1 608 000,00 ₴</div>
<div class="c cr k-summary" style="left:1246px;top:730px;width:139px;padding-right:2.5px;letter-spacing:-0.2px;">1 608 000,00 ₴</div>
<div class="ci" style="left:1388px;top:732px;background:#2f8e47;border:1.6px solid #86cf92;background-clip:padding-box"></div>
<div class="c cc k-summary" style="left:122px;top:758px;width:58px;letter-spacing:-0.65px;"><span>21%</span></div>
<div class="c cc k-summary" style="left:181px;top:758px;width:58px;letter-spacing:-0.65px;"><span>0%</span></div>
<div class="ci" style="left:259px;top:760px;background:#e18f24;border:1.6px solid #f6d27e;background-clip:padding-box"></div>
<div class="c cr k-summary" style="left:299px;top:758px;width:58px;padding-right:2px;letter-spacing:0.15px;">6</div>
<svg class="a" style="left:378px;top:769px" width="7" height="7" viewBox="0 0 7 7"><path d="M6.5 0.5 V6.5 H0.5 Z" fill="#404040"/></svg>
<div class="c k-summary" style="left:390px;top:758px;width:242px;letter-spacing:0.2px">Постачання</div>
<div class="c cc k-summary" style="left:633px;top:758px;width:82px;letter-spacing:0.15px;"><span>27,5 днів</span></div>
<div class="c cc k-summary" style="left:716px;top:758px;width:82px;letter-spacing:0.15px;"><span>27,5 днів</span></div>
<div class="ci" style="left:802px;top:760px;background:#2f8e47;border:1.6px solid #86cf92;background-clip:padding-box"></div>
<div class="c cc k-summary" style="left:842px;top:758px;width:98px;letter-spacing:0.15px;"><span>07.06.25</span></div>
<div class="c cc k-summary" style="left:941px;top:758px;width:122px;letter-spacing:0.15px;"><span>07.06.25</span></div>
<div class="c cr k-summary" style="left:1107px;top:758px;width:138px;padding-right:2px;letter-spacing:-0.2px;"></div>
<div class="c cr k-summary" style="left:1246px;top:758px;width:139px;padding-right:2.5px;letter-spacing:-0.2px;">0,00 ₴</div>
<div class="ci" style="left:1388px;top:760px;background:#2f8e47;border:1.6px solid #86cf92;background-clip:padding-box"></div>
<div class="c cc k-summary" style="left:122px;top:786px;width:58px;letter-spacing:-0.65px;"><span>21%</span></div>
<div class="c cc k-summary" style="left:181px;top:786px;width:58px;letter-spacing:-0.65px;"><span>0%</span></div>
<div class="ci" style="left:259px;top:788px;background:#e18f24;border:1.6px solid #f6d27e;background-clip:padding-box"></div>
<div class="c cr k-summary" style="left:299px;top:786px;width:58px;padding-right:2px;letter-spacing:0.15px;">6.1</div>
<svg class="a" style="left:394px;top:795px" width="7" height="10" viewBox="0 0 7 10"><path d="M1 1 L6 5 L1 9 Z" fill="#fff" stroke="#8a8a8a" stroke-width="1"/></svg>
<div class="c k-summary" style="left:406px;top:786px;width:226px;letter-spacing:0.2px">Постачання дерев</div>
<div class="c cc k-summary" style="left:633px;top:786px;width:82px;letter-spacing:0.15px;"><span>27,5 днів</span></div>
<div class="c cc k-summary" style="left:716px;top:786px;width:82px;letter-spacing:0.15px;"><span>27,5 днів</span></div>
<div class="ci" style="left:802px;top:788px;background:#2f8e47;border:1.6px solid #86cf92;background-clip:padding-box"></div>
<div class="c cc k-summary" style="left:842px;top:786px;width:98px;letter-spacing:0.15px;"><span>07.06.25</span></div>
<div class="c cc k-summary" style="left:941px;top:786px;width:122px;letter-spacing:0.15px;"><span>07.06.25</span></div>
<div class="c cr k-summary" style="left:1107px;top:786px;width:138px;padding-right:2px;letter-spacing:-0.2px;"></div>
<div class="c cr k-summary" style="left:1246px;top:786px;width:139px;padding-right:2.5px;letter-spacing:-0.2px;">0,00 ₴</div>
<div class="ci" style="left:1388px;top:788px;background:#2f8e47;border:1.6px solid #86cf92;background-clip:padding-box"></div>
<div class="c cc k-summary" style="left:122px;top:814px;width:58px;letter-spacing:-0.65px;"><span>0%</span></div>
<div class="c cc k-summary" style="left:181px;top:814px;width:58px;letter-spacing:-0.65px;"><span>0%</span></div>
<div class="ci" style="left:259px;top:816px;background:#2f8e47;border:1.6px solid #86cf92;background-clip:padding-box"></div>
<div class="c cr k-summary" style="left:299px;top:814px;width:58px;padding-right:2px;letter-spacing:0.15px;">7</div>
<svg class="a" style="left:378px;top:823px" width="7" height="10" viewBox="0 0 7 10"><path d="M1 1 L6 5 L1 9 Z" fill="#fff" stroke="#8a8a8a" stroke-width="1"/></svg>
<div class="c k-summary" style="left:390px;top:814px;width:242px;letter-spacing:0.2px">Закриття проекту</div>
<div class="c cc k-summary" style="left:633px;top:814px;width:82px;letter-spacing:0.15px;"><span>5 днів</span></div>
<div class="c cc k-summary" style="left:716px;top:814px;width:82px;letter-spacing:0.15px;"><span>5 днів</span></div>
<div class="ci" style="left:802px;top:816px;background:#2f8e47;border:1.6px solid #86cf92;background-clip:padding-box"></div>
<div class="c cc k-summary" style="left:842px;top:814px;width:98px;letter-spacing:0.15px;"><span>20.06.25</span></div>
<div class="c cc k-summary" style="left:941px;top:814px;width:122px;letter-spacing:0.15px;"><span>20.06.25</span></div>
<div class="c cr k-summary" style="left:1107px;top:814px;width:138px;padding-right:2px;letter-spacing:-0.2px;">100 000,00 ₴</div>
<div class="c cr k-summary" style="left:1246px;top:814px;width:139px;padding-right:2.5px;letter-spacing:-0.2px;">100 000,00 ₴</div>
<div class="ci" style="left:1388px;top:816px;background:#2f8e47;border:1.6px solid #86cf92;background-clip:padding-box"></div>
<svg class="a" style="left:87px;top:844.5px" width="18" height="18" viewBox="0 0 18 18"><path d="M9 1.8 L16.2 9 L9 16.2 L1.8 9 Z" fill="#e05a32" stroke="#e05a32" stroke-width="2.4" stroke-linejoin="round"/><rect x="8" y="4.5" width="2" height="6.2" fill="#fff"/><rect x="8" y="12" width="2" height="1.9" fill="#fff"/></svg>
<div class="c cc k-milestone" style="left:122px;top:842px;width:58px;letter-spacing:-0.65px;"><span>0%</span></div>
<div class="c cc k-milestone" style="left:181px;top:842px;width:58px;letter-spacing:-0.65px;"><span>0%</span></div>
<div class="ci" style="left:259px;top:844px;background:#2f8e47;border:1.6px solid #86cf92;background-clip:padding-box"></div>
<div class="c cr k-milestone" style="left:299px;top:842px;width:58px;padding-right:2px;letter-spacing:0.15px;">8</div>
<div class="c k-milestone" style="left:390px;top:842px;width:242px;letter-spacing:0.2px">Проект завершено</div>
<div class="c cc k-milestone" style="left:633px;top:842px;width:82px;letter-spacing:0.15px;"><span>0 днів</span></div>
<div class="c cc k-milestone" style="left:716px;top:842px;width:82px;letter-spacing:0.15px;"><span>0 днів</span></div>
<div class="ci" style="left:802px;top:844px;background:#2f8e47;border:1.6px solid #86cf92;background-clip:padding-box"></div>
<div class="c cc k-milestone" style="left:842px;top:842px;width:98px;letter-spacing:0.15px;"><span>20.06.25</span></div>
<div class="c cc k-milestone" style="left:941px;top:842px;width:122px;letter-spacing:0.15px;"><span>20.06.25</span></div>
<div class="c cr k-milestone" style="left:1107px;top:842px;width:138px;padding-right:2px;letter-spacing:-0.2px;">0,00 ₴</div>
<div class="c cr k-milestone" style="left:1246px;top:842px;width:139px;padding-right:2.5px;letter-spacing:-0.2px;">0,00 ₴</div>
<div class="ci" style="left:1388px;top:844px;background:#2f8e47;border:1.6px solid #86cf92;background-clip:padding-box"></div>
<div class="a" style="left:71px;top:338px;width:1372px;height:1px;background:#6e6e6e"></div>
<div class="a" style="left:71px;top:366px;width:1372px;height:1px;background:#6e6e6e"></div>
<div class="a" style="left:69px;top:338px;width:2px;height:29px;background:#2e7d32"></div>
<div class="a" style="left:356px;top:337px;width:278px;height:31px;border:2px solid #2f6f2f"></div>
<div class="a" style="left:629px;top:364px;width:6px;height:5px;background:#2f6f2f"></div>
<div class="a" style="left:1443px;top:98px;width:7px;height:769px;background:#2b2b2b"></div>
<div class="a" style="left:1444px;top:98px;width:2px;height:769px;background:#c4c4c4"></div>
<div class="a" style="left:1450px;top:98px;width:449px;height:45px;background:#262626;z-index:2"></div>
<div class="a" style="left:1450px;top:142px;width:449px;height:725px;background:#fff"></div>
<div class="a" style="z-index:3;left:1455px;top:101.7px;color:#f0f0f0;font-size:12.9px;line-height:16px;white-space:pre">Півріччя 1, 2025</div>
<div class="a" style="z-index:3;left:1860px;top:101.7px;width:39px;overflow:hidden;color:#f0f0f0;font-size:12.9px;line-height:16px;white-space:pre">Півріччя 2, 2025</div>
<div class="a" style="z-index:3;left:1854px;top:103px;width:1px;height:40px;background:#555"></div>
<div class="a" style="z-index:3;left:1519px;top:125px;width:1px;height:18px;background:#555"></div>
<div class="a" style="z-index:3;left:1581px;top:125px;width:1px;height:18px;background:#555"></div>
<div class="a" style="z-index:3;left:1651px;top:125px;width:1px;height:18px;background:#555"></div>
<div class="a" style="z-index:3;left:1718px;top:125px;width:1px;height:18px;background:#555"></div>
<div class="a" style="z-index:3;left:1787px;top:125px;width:1px;height:18px;background:#555"></div>
<div class="a" style="z-index:3;left:1474px;top:122px;width:20px;text-align:center;color:#f0f0f0;font-size:12.5px;line-height:16px">С</div>
<div class="a" style="z-index:3;left:1540px;top:122px;width:20px;text-align:center;color:#f0f0f0;font-size:12.5px;line-height:16px">Л</div>
<div class="a" style="z-index:3;left:1606px;top:122px;width:20px;text-align:center;color:#f0f0f0;font-size:12.5px;line-height:16px">Б</div>
<div class="a" style="z-index:3;left:1674px;top:122px;width:20px;text-align:center;color:#f0f0f0;font-size:12.5px;line-height:16px">К</div>
<div class="a" style="z-index:3;left:1742px;top:122px;width:20px;text-align:center;color:#f0f0f0;font-size:12.5px;line-height:16px">Т</div>
<div class="a" style="z-index:3;left:1810px;top:122px;width:20px;text-align:center;color:#f0f0f0;font-size:12.5px;line-height:16px">Ч</div>
<div class="a" style="z-index:3;left:1878px;top:122px;width:20px;text-align:center;color:#f0f0f0;font-size:12.5px;line-height:16px">Л</div>
<div class="a" style="left:1899px;top:98px;width:6px;height:8px;background:#b4b4b4;z-index:4"></div>
<div class="a" style="left:1899px;top:98px;width:16px;height:769px;background:#151515;border-top-left-radius:6px;z-index:4"></div>
<div class="a" style="left:1904px;top:118px;width:11px;height:749px;background:#9b9b9b;border-radius:5.5px 5.5px 0 0;z-index:4"></div>
<svg class="a" style="left:1903px;top:101px;z-index:4" width="12" height="12" viewBox="0 0 12 12"><path d="M1.5 10 L7 2.5 L12.5 10 Z" fill="#9b9b9b" stroke="#9b9b9b" stroke-width="1.2" stroke-linejoin="round"/></svg>
<svg class="a" style="left:0;top:0" width="1915" height="867" viewBox="0 0 1915 867"><rect x="1450" y="338" width="449" height="1" fill="#8a8a8a"/><rect x="1450" y="366" width="449" height="1" fill="#8a8a8a"/><rect x="1450" y="151" width="382" height="2" fill="#b0b0b0"/><rect x="1830" y="151" width="2" height="10.5" fill="#b0b0b0"/><rect x="1451" y="156" width="215" height="6" fill="#808080"/><path d="M1450 179.5 L1455 184.5 L1450 189.5 Z" fill="#606060"/><path d="M1450 184.5 H1457 Q1458.5 184.5 1458.5 186 V203" stroke="#000" stroke-width="1" fill="none" shape-rendering="crispEdges"/><path d="M1454.2 202.3 L1462.8 202.3 L1458.5 206.5 Z" fill="#000"/><rect x="1460" y="212" width="75" height="6" fill="#808080"/><rect x="1460" y="207" width="75" height="2" fill="#595959"/><rect x="1460" y="207" width="3" height="11" fill="#595959"/><rect x="1532" y="207" width="3" height="11" fill="#595959"/><rect x="1522" y="240" width="306" height="6" fill="#808080"/><rect x="1522" y="235" width="306" height="2" fill="#595959"/><rect x="1522" y="235" width="3" height="11" fill="#595959"/><rect x="1825" y="235" width="3" height="11" fill="#595959"/><rect x="1562" y="268" width="59" height="6" fill="#808080"/><rect x="1562" y="263" width="59" height="2" fill="#595959"/><rect x="1562" y="263" width="3" height="11" fill="#595959"/><rect x="1618" y="263" width="3" height="11" fill="#595959"/><rect x="1602" y="296" width="64" height="6" fill="#808080"/><rect x="1602" y="291" width="215" height="2" fill="#595959"/><rect x="1602" y="291" width="3" height="11" fill="#595959"/><rect x="1814" y="291" width="3" height="11" fill="#595959"/><rect x="1602" y="324" width="10" height="6" fill="#808080"/><rect x="1602" y="319" width="10" height="2" fill="#595959"/><rect x="1602" y="319" width="3" height="11" fill="#595959"/><rect x="1609" y="319" width="3" height="11" fill="#595959"/><rect x="1609" y="352" width="43" height="6" fill="#808080"/><rect x="1609" y="347" width="43" height="2" fill="#595959"/><rect x="1609" y="347" width="3" height="11" fill="#595959"/><rect x="1649" y="347" width="3" height="11" fill="#595959"/><rect x="1606" y="380" width="4" height="6" fill="#5f5f5f"/><rect x="1611" y="375" width="5" height="5" fill="#3a7fd0"/><path d="M1616 377.5 H1618 Q1619.5 377.5 1619.5 379 V398" stroke="#3a7fd0" stroke-width="1" fill="none" shape-rendering="crispEdges"/><path d="M1615.0 398 H1624.0 L1619.5 403.5 Z" fill="#3a7fd0"/><rect x="1610" y="408" width="1.5" height="5" fill="#5f5f5f"/><rect x="1618.5" y="403" width="2" height="5" fill="#3a7fd0"/><path d="M1620.5 405.5 Q1622 405.5 1622 407 V427" stroke="#3a7fd0" stroke-width="1" fill="none" shape-rendering="crispEdges"/><path d="M1617.5 427 H1626.5 L1622.0 432.5 Z" fill="#3a7fd0"/><rect x="1612" y="436" width="32" height="5" fill="#5f5f5f"/><rect x="1619" y="431" width="27" height="5" fill="#3a7fd0"/><path d="M1646 433.5 H1647 Q1648.5 433.5 1648.5 435 V454" stroke="#3a7fd0" stroke-width="1" fill="none" shape-rendering="crispEdges"/><path d="M1644.0 454 H1653.0 L1648.5 459.5 Z" fill="#3a7fd0"/><rect x="1644.5" y="464" width="5" height="5.5" fill="#5f5f5f"/><rect x="1646" y="459" width="4.7" height="4.5" fill="#3a7fd0"/><path d="M1650.7 461.5 H1652 Q1654 461.5 1654 464 V475 Q1654 477 1652 477 H1632 Q1630 477 1630 479 V491 Q1630 492.5 1632 492.5 H1636" stroke="#3a7fd0" stroke-width="1" fill="none" shape-rendering="crispEdges"/><path d="M1634.5 488 L1640.5 492.5 L1634.5 497 Z" fill="#3a7fd0"/><path d="M1650.7 487.5 L1655.7 492.5 L1650.7 497.5 L1645.7 492.5 Z" fill="#fff" stroke="#707070" stroke-width="1"/><path d="M1644.5 487 L1650 492.5 L1644.5 498 L1639 492.5 Z" fill="#505050"/><path d="M1647.5 492.5 V510" stroke="#000" stroke-width="1" shape-rendering="crispEdges"/><path d="M1643.0 510 H1652.0 L1647.5 516.0 Z" fill="#000"/><rect x="1643" y="520" width="23" height="6" fill="#808080"/><rect x="1643" y="515" width="47" height="2" fill="#595959"/><rect x="1643" y="515" width="3" height="11" fill="#595959"/><rect x="1687" y="515" width="3" height="11" fill="#595959"/><rect x="1650" y="548" width="11" height="5.5" fill="#5f5f5f"/><rect x="1645" y="543" width="13" height="5" fill="#3a7fd0"/><rect x="1650" y="576" width="11" height="5.5" fill="#5f5f5f"/><rect x="1645" y="571" width="13" height="5" fill="#3a7fd0"/><path d="M1658 545.5 H1659.5 Q1661 545.5 1661 547 V594" stroke="#3a7fd0" stroke-width="1" fill="none" shape-rendering="crispEdges"/><path d="M1656.5 594 H1665.5 L1661.0 599.5 Z" fill="#3a7fd0"/><rect x="1661" y="604" width="14" height="5.5" fill="#5f5f5f"/><rect x="1658" y="599" width="8" height="5" fill="#ee0000"/><rect x="1666" y="599" width="7.5" height="5" fill="#f7b6b6"/><path d="M1673.5 601.5 H1674.5 Q1676 601.5 1676 603 V622" stroke="#e05555" stroke-width="1" fill="none" shape-rendering="crispEdges"/><path d="M1671.5 622 H1680.5 L1676.0 627.5 Z" fill="#e05555"/><rect x="1675" y="632" width="15.5" height="5" fill="#5f5f5f"/><rect x="1673.5" y="627" width="15.5" height="5" fill="#f7b6b6"/><path d="M1689 629.5 H1690 Q1691.5 629.5 1691.5 631 V651" stroke="#e05555" stroke-width="1" fill="none" shape-rendering="crispEdges"/><path d="M1687.0 651 H1696.0 L1691.5 656.5 Z" fill="#e05555"/><path d="M1690.5 655.5 L1695.5 660.5 L1690.5 665.5 L1685.5 660.5 Z" fill="#fff" stroke="#707070" stroke-width="1"/><path d="M1688.8 655 L1694.3 660.5 L1688.8 666 L1683.3 660.5 Z" fill="#505050"/><path d="M1691.5 660.5 V678" stroke="#000" stroke-width="1" shape-rendering="crispEdges"/><path d="M1687.0 678 H1696.0 L1691.5 684.0 Z" fill="#000"/><path d="M1648 654.5 H1654 V659 H1657.5 L1651 665.5 L1644.5 659 H1648 Z" fill="#7cb342"/><rect x="1688" y="683" width="28" height="2" fill="#595959"/><rect x="1688" y="683" width="3" height="11" fill="#595959"/><rect x="1713" y="683" width="3" height="11" fill="#595959"/><rect x="1713" y="711" width="50" height="2" fill="#595959"/><rect x="1713" y="711" width="3" height="11" fill="#595959"/><rect x="1760" y="711" width="3" height="11" fill="#595959"/><rect x="1713" y="739" width="104" height="2" fill="#595959"/><rect x="1713" y="739" width="3" height="11" fill="#595959"/><rect x="1814" y="739" width="3" height="11" fill="#595959"/><rect x="1713" y="767" width="91" height="2" fill="#595959"/><rect x="1713" y="767" width="3" height="11" fill="#595959"/><rect x="1801" y="767" width="3" height="11" fill="#595959"/><rect x="1713" y="795" width="91" height="2" fill="#595959"/><rect x="1713" y="795" width="3" height="11" fill="#595959"/><rect x="1801" y="795" width="3" height="11" fill="#595959"/><rect x="1814" y="823" width="19" height="2" fill="#595959"/><rect x="1814" y="823" width="3" height="11" fill="#595959"/><rect x="1830" y="823" width="3" height="11" fill="#595959"/><path d="M1833 825 Q1834.5 825 1834.5 827 V847" stroke="#000" stroke-width="1" fill="none" shape-rendering="crispEdges"/><path d="M1830.0 847 H1839.0 L1834.5 852.5 Z" fill="#000"/><path d="M1831.8 851 L1836.3 856 L1831.8 861 L1827.3 856 Z" fill="#777"/><path d="M1832 852 L1835 856 L1832 860" fill="none" stroke="#fff" stroke-width="0.8"/><path d="M1782 850.5 H1788 V855 H1791.5 L1785 861.5 L1778.5 855 H1782 Z" fill="#7cb342"/></svg>
<div class="gl" style="left:1844.5px;top:143px">42%</div>
<div class="gl" style="left:1462px;top:171px">01.01</div>
<div class="gl" style="left:1547.7px;top:199px">100%</div>
<div class="gl" style="left:1839.8px;top:227px">99%</div>
<div class="gl" style="left:1633.2px;top:255px">100%</div>
<div class="gl" style="left:1828.8px;top:283px">30%</div>
<div class="gl" style="left:1624.2px;top:311px">100%</div>
<div class="gl" style="left:1664px;top:339px">100%</div>
<div class="gl" style="left:1624.6px;top:367px">100%</div>
<div class="gl" style="left:1627.6px;top:395px">100%</div>
<div class="gl" style="left:1654px;top:423px">100%</div>
<div class="gl" style="left:1659px;top:451px">100%</div>
<div class="gl" style="left:1657.6px;top:479px">29.03</div>
<div class="gl" style="left:1701.5px;top:507px">59%</div>
<div class="gl" style="left:1667px;top:535px">100%</div>
<div class="gl" style="left:1667px;top:563px">100%</div>
<div class="gl" style="left:1680.7px;top:591px">50%</div>
<div class="gl" style="left:1696px;top:619px">0%</div>
<div class="gl" style="left:1701.5px;top:647px">17.04</div>
<div class="gl" style="left:1727.3px;top:675px">0%</div>
<div class="gl" style="left:1774px;top:703px">0%</div>
<div class="gl" style="left:1828px;top:731px">0%</div>
<div class="gl" style="left:1815.7px;top:759px">0%</div>
<div class="gl" style="left:1815.7px;top:787px">0%</div>
<div class="gl" style="left:1844px;top:815px">0%</div>
<div class="gl" style="left:1844.8px;top:843px">20.06</div>
<svg class="a" style="left:0;top:0" width="1915" height="867" viewBox="0 0 1915 867"><rect x="1832" y="143" width="1" height="1" fill="#5a5a5a"/><rect x="1832" y="147" width="1" height="1" fill="#5a5a5a"/><rect x="1832" y="151" width="1" height="1" fill="#5a5a5a"/><rect x="1832" y="155" width="1" height="1" fill="#5a5a5a"/><rect x="1832" y="159" width="1" height="1" fill="#5a5a5a"/><rect x="1832" y="163" width="1" height="1" fill="#5a5a5a"/><rect x="1832" y="167" width="1" height="1" fill="#5a5a5a"/><rect x="1832" y="171" width="1" height="1" fill="#5a5a5a"/><rect x="1832" y="175" width="1" height="1" fill="#5a5a5a"/><rect x="1832" y="179" width="1" height="1" fill="#5a5a5a"/><rect x="1832" y="183" width="1" height="1" fill="#5a5a5a"/><rect x="1832" y="187" width="1" height="1" fill="#5a5a5a"/><rect x="1832" y="191" width="1" height="1" fill="#5a5a5a"/><rect x="1832" y="195" width="1" height="1" fill="#5a5a5a"/><rect x="1832" y="199" width="1" height="1" fill="#5a5a5a"/><rect x="1832" y="203" width="1" height="1" fill="#5a5a5a"/><rect x="1832" y="207" width="1" height="1" fill="#5a5a5a"/><rect x="1832" y="211" width="1" height="1" fill="#5a5a5a"/><rect x="1832" y="215" width="1" height="1" fill="#5a5a5a"/><rect x="1832" y="219" width="1" height="1" fill="#5a5a5a"/><rect x="1832" y="223" width="1" height="1" fill="#5a5a5a"/><rect x="1832" y="227" width="1" height="1" fill="#5a5a5a"/><rect x="1832" y="231" width="1" height="1" fill="#5a5a5a"/><rect x="1832" y="235" width="1" height="1" fill="#5a5a5a"/><rect x="1832" y="239" width="1" height="1" fill="#5a5a5a"/><rect x="1832" y="243" width="1" height="1" fill="#5a5a5a"/><rect x="1832" y="247" width="1" height="1" fill="#5a5a5a"/><rect x="1832" y="251" width="1" height="1" fill="#5a5a5a"/><rect x="1832" y="255" width="1" height="1" fill="#5a5a5a"/><rect x="1832" y="259" width="1" height="1" fill="#5a5a5a"/><rect x="1832" y="263" width="1" height="1" fill="#5a5a5a"/><rect x="1832" y="267" width="1" height="1" fill="#5a5a5a"/><rect x="1832" y="271" width="1" height="1" fill="#5a5a5a"/><rect x="1832" y="275" width="1" height="1" fill="#5a5a5a"/><rect x="1832" y="279" width="1" height="1" fill="#5a5a5a"/><rect x="1832" y="283" width="1" height="1" fill="#5a5a5a"/><rect x="1832" y="287" width="1" height="1" fill="#5a5a5a"/><rect x="1832" y="291" width="1" height="1" fill="#5a5a5a"/><rect x="1832" y="295" width="1" height="1" fill="#5a5a5a"/><rect x="1832" y="299" width="1" height="1" fill="#5a5a5a"/><rect x="1832" y="303" width="1" height="1" fill="#5a5a5a"/><rect x="1832" y="307" width="1" height="1" fill="#5a5a5a"/><rect x="1832" y="311" width="1" height="1" fill="#5a5a5a"/><rect x="1832" y="315" width="1" height="1" fill="#5a5a5a"/><rect x="1832" y="319" width="1" height="1" fill="#5a5a5a"/><rect x="1832" y="323" width="1" height="1" fill="#5a5a5a"/><rect x="1832" y="327" width="1" height="1" fill="#5a5a5a"/><rect x="1832" y="331" width="1" height="1" fill="#5a5a5a"/><rect x="1832" y="335" width="1" height="1" fill="#5a5a5a"/><rect x="1832" y="339" width="1" height="1" fill="#5a5a5a"/><rect x="1832" y="343" width="1" height="1" fill="#5a5a5a"/><rect x="1832" y="347" width="1" height="1" fill="#5a5a5a"/><rect x="1832" y="351" width="1" height="1" fill="#5a5a5a"/><rect x="1832" y="355" width="1" height="1" fill="#5a5a5a"/><rect x="1832" y="359" width="1" height="1" fill="#5a5a5a"/><rect x="1832" y="363" width="1" height="1" fill="#5a5a5a"/><rect x="1832" y="367" width="1" height="1" fill="#5a5a5a"/><rect x="1832" y="371" width="1" height="1" fill="#5a5a5a"/><rect x="1832" y="375" width="1" height="1" fill="#5a5a5a"/><rect x="1832" y="379" width="1" height="1" fill="#5a5a5a"/><rect x="1832" y="383" width="1" height="1" fill="#5a5a5a"/><rect x="1832" y="387" width="1" height="1" fill="#5a5a5a"/><rect x="1832" y="391" width="1" height="1" fill="#5a5a5a"/><rect x="1832" y="395" width="1" height="1" fill="#5a5a5a"/><rect x="1832" y="399" width="1" height="1" fill="#5a5a5a"/><rect x="1832" y="403" width="1" height="1" fill="#5a5a5a"/><rect x="1832" y="407" width="1" height="1" fill="#5a5a5a"/><rect x="1832" y="411" width="1" height="1" fill="#5a5a5a"/><rect x="1832" y="415" width="1" height="1" fill="#5a5a5a"/><rect x="1832" y="419" width="1" height="1" fill="#5a5a5a"/><rect x="1832" y="423" width="1" height="1" fill="#5a5a5a"/><rect x="1832" y="427" width="1" height="1" fill="#5a5a5a"/><rect x="1832" y="431" width="1" height="1" fill="#5a5a5a"/><rect x="1832" y="435" width="1" height="1" fill="#5a5a5a"/><rect x="1832" y="439" width="1" height="1" fill="#5a5a5a"/><rect x="1832" y="443" width="1" height="1" fill="#5a5a5a"/><rect x="1832" y="447" width="1" height="1" fill="#5a5a5a"/><rect x="1832" y="451" width="1" height="1" fill="#5a5a5a"/><rect x="1832" y="455" width="1" height="1" fill="#5a5a5a"/><rect x="1832" y="459" width="1" height="1" fill="#5a5a5a"/><rect x="1832" y="463" width="1" height="1" fill="#5a5a5a"/><rect x="1832" y="467" width="1" height="1" fill="#5a5a5a"/><rect x="1832" y="471" width="1" height="1" fill="#5a5a5a"/><rect x="1832" y="475" width="1" height="1" fill="#5a5a5a"/><rect x="1832" y="479" width="1" height="1" fill="#5a5a5a"/><rect x="1832" y="483" width="1" height="1" fill="#5a5a5a"/><rect x="1832" y="487" width="1" height="1" fill="#5a5a5a"/><rect x="1832" y="491" width="1" height="1" fill="#5a5a5a"/><rect x="1832" y="495" width="1" height="1" fill="#5a5a5a"/><rect x="1832" y="499" width="1" height="1" fill="#5a5a5a"/><rect x="1832" y="503" width="1" height="1" fill="#5a5a5a"/><rect x="1832" y="507" width="1" height="1" fill="#5a5a5a"/><rect x="1832" y="511" width="1" height="1" fill="#5a5a5a"/><rect x="1832" y="515" width="1" height="1" fill="#5a5a5a"/><rect x="1832" y="519" width="1" height="1" fill="#5a5a5a"/><rect x="1832" y="523" width="1" height="1" fill="#5a5a5a"/><rect x="1832" y="527" width="1" height="1" fill="#5a5a5a"/><rect x="1832" y="531" width="1" height="1" fill="#5a5a5a"/><rect x="1832" y="535" width="1" height="1" fill="#5a5a5a"/><rect x="1832" y="539" width="1" height="1" fill="#5a5a5a"/><rect x="1832" y="543" width="1" height="1" fill="#5a5a5a"/><rect x="1832" y="547" width="1" height="1" fill="#5a5a5a"/><rect x="1832" y="551" width="1" height="1" fill="#5a5a5a"/><rect x="1832" y="555" width="1" height="1" fill="#5a5a5a"/><rect x="1832" y="559" width="1" height="1" fill="#5a5a5a"/><rect x="1832" y="563" width="1" height="1" fill="#5a5a5a"/><rect x="1832" y="567" width="1" height="1" fill="#5a5a5a"/><rect x="1832" y="571" width="1" height="1" fill="#5a5a5a"/><rect x="1832" y="575" width="1" height="1" fill="#5a5a5a"/><rect x="1832" y="579" width="1" height="1" fill="#5a5a5a"/><rect x="1832" y="583" width="1" height="1" fill="#5a5a5a"/><rect x="1832" y="587" width="1" height="1" fill="#5a5a5a"/><rect x="1832" y="591" width="1" height="1" fill="#5a5a5a"/><rect x="1832" y="595" width="1" height="1" fill="#5a5a5a"/><rect x="1832" y="599" width="1" height="1" fill="#5a5a5a"/><rect x="1832" y="603" width="1" height="1" fill="#5a5a5a"/><rect x="1832" y="607" width="1" height="1" fill="#5a5a5a"/><rect x="1832" y="611" width="1" height="1" fill="#5a5a5a"/><rect x="1832" y="615" width="1" height="1" fill="#5a5a5a"/><rect x="1832" y="619" width="1" height="1" fill="#5a5a5a"/><rect x="1832" y="623" width="1" height="1" fill="#5a5a5a"/><rect x="1832" y="627" width="1" height="1" fill="#5a5a5a"/><rect x="1832" y="631" width="1" height="1" fill="#5a5a5a"/><rect x="1832" y="635" width="1" height="1" fill="#5a5a5a"/><rect x="1832" y="639" width="1" height="1" fill="#5a5a5a"/><rect x="1832" y="643" width="1" height="1" fill="#5a5a5a"/><rect x="1832" y="647" width="1" height="1" fill="#5a5a5a"/><rect x="1832" y="651" width="1" height="1" fill="#5a5a5a"/><rect x="1832" y="655" width="1" height="1" fill="#5a5a5a"/><rect x="1832" y="659" width="1" height="1" fill="#5a5a5a"/><rect x="1832" y="663" width="1" height="1" fill="#5a5a5a"/><rect x="1832" y="667" width="1" height="1" fill="#5a5a5a"/><rect x="1832" y="671" width="1" height="1" fill="#5a5a5a"/><rect x="1832" y="675" width="1" height="1" fill="#5a5a5a"/><rect x="1832" y="679" width="1" height="1" fill="#5a5a5a"/><rect x="1832" y="683" width="1" height="1" fill="#5a5a5a"/><rect x="1832" y="687" width="1" height="1" fill="#5a5a5a"/><rect x="1832" y="691" width="1" height="1" fill="#5a5a5a"/><rect x="1832" y="695" width="1" height="1" fill="#5a5a5a"/><rect x="1832" y="699" width="1" height="1" fill="#5a5a5a"/><rect x="1832" y="703" width="1" height="1" fill="#5a5a5a"/><rect x="1832" y="707" width="1" height="1" fill="#5a5a5a"/><rect x="1832" y="711" width="1" height="1" fill="#5a5a5a"/><rect x="1832" y="715" width="1" height="1" fill="#5a5a5a"/><rect x="1832" y="719" width="1" height="1" fill="#5a5a5a"/><rect x="1832" y="723" width="1" height="1" fill="#5a5a5a"/><rect x="1832" y="727" width="1" height="1" fill="#5a5a5a"/><rect x="1832" y="731" width="1" height="1" fill="#5a5a5a"/><rect x="1832" y="735" width="1" height="1" fill="#5a5a5a"/><rect x="1832" y="739" width="1" height="1" fill="#5a5a5a"/><rect x="1832" y="743" width="1" height="1" fill="#5a5a5a"/><rect x="1832" y="747" width="1" height="1" fill="#5a5a5a"/><rect x="1832" y="751" width="1" height="1" fill="#5a5a5a"/><rect x="1832" y="755" width="1" height="1" fill="#5a5a5a"/><rect x="1832" y="759" width="1" height="1" fill="#5a5a5a"/><rect x="1832" y="763" width="1" height="1" fill="#5a5a5a"/><rect x="1832" y="767" width="1" height="1" fill="#5a5a5a"/><rect x="1832" y="771" width="1" height="1" fill="#5a5a5a"/><rect x="1832" y="775" width="1" height="1" fill="#5a5a5a"/><rect x="1832" y="779" width="1" height="1" fill="#5a5a5a"/><rect x="1832" y="783" width="1" height="1" fill="#5a5a5a"/><rect x="1832" y="787" width="1" height="1" fill="#5a5a5a"/><rect x="1832" y="791" width="1" height="1" fill="#5a5a5a"/><rect x="1832" y="795" width="1" height="1" fill="#5a5a5a"/><rect x="1832" y="799" width="1" height="1" fill="#5a5a5a"/><rect x="1832" y="803" width="1" height="1" fill="#5a5a5a"/><rect x="1832" y="807" width="1" height="1" fill="#5a5a5a"/><rect x="1832" y="811" width="1" height="1" fill="#5a5a5a"/><rect x="1832" y="815" width="1" height="1" fill="#5a5a5a"/><rect x="1832" y="819" width="1" height="1" fill="#5a5a5a"/><rect x="1832" y="823" width="1" height="1" fill="#5a5a5a"/><rect x="1832" y="827" width="1" height="1" fill="#5a5a5a"/><rect x="1832" y="831" width="1" height="1" fill="#5a5a5a"/><rect x="1832" y="835" width="1" height="1" fill="#5a5a5a"/><rect x="1832" y="839" width="1" height="1" fill="#5a5a5a"/><rect x="1832" y="843" width="1" height="1" fill="#5a5a5a"/><rect x="1832" y="847" width="1" height="1" fill="#5a5a5a"/><rect x="1832" y="851" width="1" height="1" fill="#5a5a5a"/><rect x="1832" y="855" width="1" height="1" fill="#5a5a5a"/><rect x="1832" y="859" width="1" height="1" fill="#5a5a5a"/><rect x="1832" y="863" width="1" height="1" fill="#5a5a5a"/><rect x="1832" y="867" width="1" height="1" fill="#5a5a5a"/><rect x="1852" y="142" width="1" height="725" fill="#7fc07f"/></svg>
<div class="a" style="left:1899px;top:98px;width:6px;height:8px;background:#b4b4b4;z-index:4"></div>
<div class="a" style="left:1899px;top:98px;width:16px;height:769px;background:#151515;border-top-left-radius:6px;z-index:4"></div>
<div class="a" style="left:1904px;top:118px;width:11px;height:749px;background:#9b9b9b;border-radius:5.5px 5.5px 0 0;z-index:4"></div>
<svg class="a" style="left:1903px;top:101px;z-index:4" width="12" height="12" viewBox="0 0 12 12"><path d="M1.5 10 L7 2.5 L12.5 10 Z" fill="#9b9b9b" stroke="#9b9b9b" stroke-width="1.2" stroke-linejoin="round"/></svg>
</body></html>
